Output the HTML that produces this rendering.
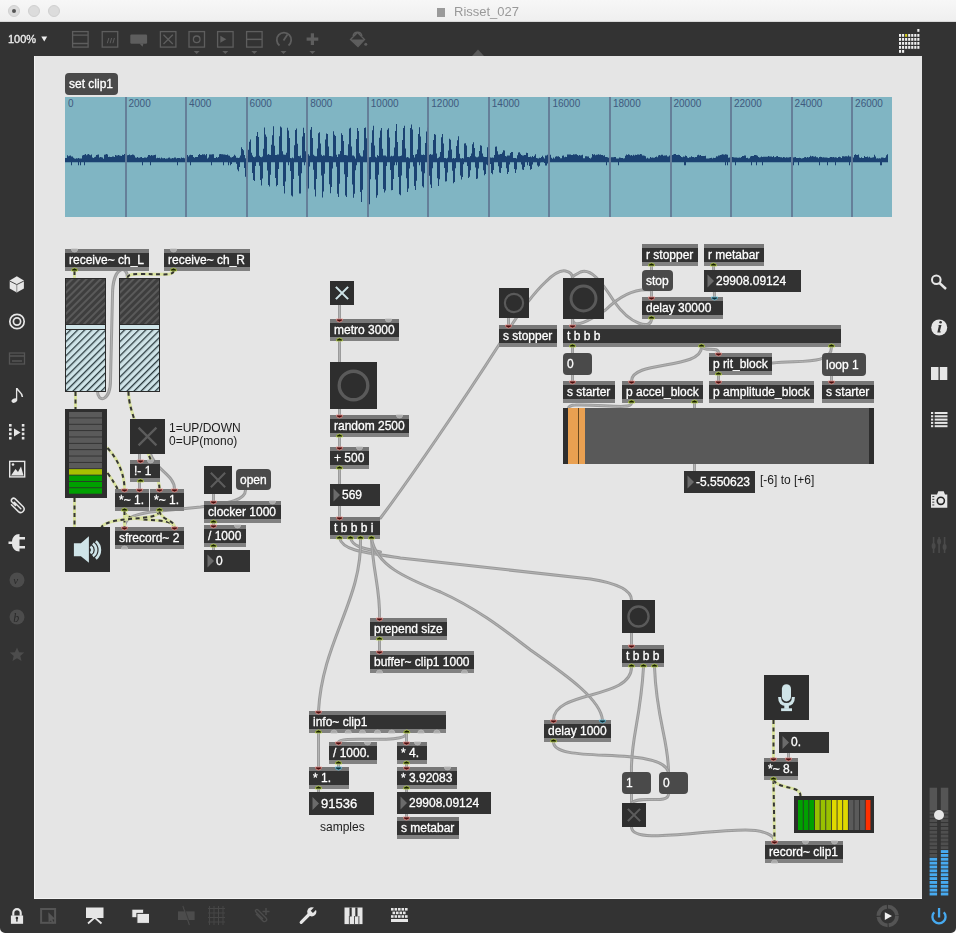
<!DOCTYPE html><html><head><meta charset="utf-8"><style>
*{margin:0;padding:0;box-sizing:border-box}
html,body{width:956px;height:933px;overflow:hidden;background:#333;font-family:"Liberation Sans",sans-serif}
.a{position:absolute}
.ob,.ms,.nb,.cm,.tx{will-change:transform}
.ob{position:absolute;height:22px;background:#323232;border-top:4px solid #777;border-bottom:4px solid #818181;color:#fff;font-size:12px;line-height:14px;padding-left:4px;white-space:nowrap;overflow:hidden;-webkit-text-stroke:0.3px #fff}
.ms,.nb{-webkit-text-stroke:0.3px #fff}
.ms{position:absolute;background:#4a4a4a;border-radius:4px;color:#fff;font-size:12px;white-space:nowrap;padding-left:4px}
.nb{position:absolute;background:#323232;color:#fff;font-size:12px;white-space:nowrap}
.cm{position:absolute;color:#1c1c1c;font-size:12px;white-space:nowrap;line-height:13px}

</style></head><body>
<div class="a" style="left:0;top:0;width:956px;height:22px;background:linear-gradient(#f7f7f7,#efefef);border-bottom:1px solid #d8d8d8"></div>
<div class="a" style="left:8px;top:5px;width:12px;height:12px;border-radius:6px;background:#dcdcdc;border:1px solid #d0d0d0"></div>
<div class="a" style="left:28px;top:5px;width:12px;height:12px;border-radius:6px;background:#dcdcdc;border:1px solid #d0d0d0"></div>
<div class="a" style="left:48px;top:5px;width:12px;height:12px;border-radius:6px;background:#dcdcdc;border:1px solid #d0d0d0"></div>
<div class="a" style="left:12px;top:9px;width:4px;height:4px;border-radius:2px;background:#555"></div>
<div class="a" style="left:437px;top:8px;width:8px;height:9px;background:#9a9a9a"></div>
<div class="a tx" style="left:454px;top:4px;font-size:13px;line-height:16px;color:#999">Risset_027</div>
<div class="a tx" style="left:8px;top:32px;font-size:11px;line-height:14px;color:#f0f0f0;-webkit-text-stroke:0.3px #f0f0f0">100%</div>
<svg class="a" style="left:0;top:0" width="956" height="60">
<path d="M41.3,36.4 L47.2,36.4 L44.25,41.6 Z" fill="#eee"/>
</svg>
<div class="a" style="left:34px;top:56px;width:888px;height:843px;background:#e5e5e5;border-left:1px solid #f3f3f3;border-bottom:1px solid #f3f3f3"></div>
<svg class="a" style="left:65px;top:97px" width="827" height="120"><rect width="827" height="120" fill="#80b5c3"/><rect x="60" y="0" width="2" height="120" fill="#627c93"/><rect x="120" y="0" width="2" height="120" fill="#627c93"/><rect x="181" y="0" width="2" height="120" fill="#627c93"/><rect x="241" y="0" width="2" height="120" fill="#627c93"/><rect x="302" y="0" width="2" height="120" fill="#627c93"/><rect x="362" y="0" width="2" height="120" fill="#627c93"/><rect x="423" y="0" width="2" height="120" fill="#627c93"/><rect x="483" y="0" width="2" height="120" fill="#627c93"/><rect x="544" y="0" width="2" height="120" fill="#627c93"/><rect x="605" y="0" width="2" height="120" fill="#627c93"/><rect x="665" y="0" width="2" height="120" fill="#627c93"/><rect x="726" y="0" width="2" height="120" fill="#627c93"/><rect x="786" y="0" width="2" height="120" fill="#627c93"/><text x="3.0" y="10" font-size="10" fill="#3f5a7e" font-family="Liberation Sans">0</text><text x="63.5" y="10" font-size="10" fill="#3f5a7e" font-family="Liberation Sans">2000</text><text x="124.1" y="10" font-size="10" fill="#3f5a7e" font-family="Liberation Sans">4000</text><text x="184.6" y="10" font-size="10" fill="#3f5a7e" font-family="Liberation Sans">6000</text><text x="245.2" y="10" font-size="10" fill="#3f5a7e" font-family="Liberation Sans">8000</text><text x="305.8" y="10" font-size="10" fill="#3f5a7e" font-family="Liberation Sans">10000</text><text x="366.3" y="10" font-size="10" fill="#3f5a7e" font-family="Liberation Sans">12000</text><text x="426.8" y="10" font-size="10" fill="#3f5a7e" font-family="Liberation Sans">14000</text><text x="487.4" y="10" font-size="10" fill="#3f5a7e" font-family="Liberation Sans">16000</text><text x="547.9" y="10" font-size="10" fill="#3f5a7e" font-family="Liberation Sans">18000</text><text x="608.5" y="10" font-size="10" fill="#3f5a7e" font-family="Liberation Sans">20000</text><text x="669.0" y="10" font-size="10" fill="#3f5a7e" font-family="Liberation Sans">22000</text><text x="729.6" y="10" font-size="10" fill="#3f5a7e" font-family="Liberation Sans">24000</text><text x="790.1" y="10" font-size="10" fill="#3f5a7e" font-family="Liberation Sans">26000</text><path d="M0,61.0 L1,61.0 L1,61.1 L2,61.1 L2,58.3 L3,58.3 L3,59.2 L4,59.2 L4,58.8 L5,58.8 L5,58.4 L6,58.4 L6,59.4 L7,59.4 L7,59.5 L8,59.5 L8,60.8 L9,60.8 L9,61.5 L10,61.5 L10,61.7 L11,61.7 L11,61.2 L12,61.2 L12,61.6 L13,61.6 L13,61.1 L14,61.1 L14,61.6 L15,61.6 L15,61.6 L16,61.6 L16,61.4 L17,61.4 L17,58.4 L18,58.4 L18,58.0 L19,58.0 L19,57.8 L20,57.8 L20,57.1 L21,57.1 L21,58.2 L22,58.2 L22,57.4 L23,57.4 L23,57.0 L24,57.0 L24,57.7 L25,57.7 L25,58.2 L26,58.2 L26,57.5 L27,57.5 L27,60.5 L28,60.5 L28,60.9 L29,60.9 L29,60.3 L30,60.3 L30,59.8 L31,59.8 L31,57.9 L32,57.9 L32,57.7 L33,57.7 L33,57.5 L34,57.5 L34,60.6 L35,60.6 L35,60.1 L36,60.1 L36,60.3 L37,60.3 L37,60.4 L38,60.4 L38,61.7 L39,61.7 L39,57.7 L40,57.7 L40,57.6 L41,57.6 L41,57.0 L42,57.0 L42,57.4 L43,57.4 L43,59.9 L44,59.9 L44,59.8 L45,59.8 L45,59.9 L46,59.9 L46,60.1 L47,60.1 L47,59.4 L48,59.4 L48,59.6 L49,59.6 L49,59.9 L50,59.9 L50,58.1 L51,58.1 L51,58.5 L52,58.5 L52,58.5 L53,58.5 L53,58.0 L54,58.0 L54,58.5 L55,58.5 L55,58.8 L56,58.8 L56,58.9 L57,58.9 L57,57.7 L58,57.7 L58,58.1 L59,58.1 L59,57.1 L60,57.1 L60,57.3 L61,57.3 L61,57.2 L62,57.2 L62,58.2 L63,58.2 L63,57.9 L64,57.9 L64,57.5 L65,57.5 L65,58.2 L66,58.2 L66,58.0 L67,58.0 L67,57.4 L68,57.4 L68,57.8 L69,57.8 L69,58.6 L70,58.6 L70,60.5 L71,60.5 L71,60.8 L72,60.8 L72,60.0 L73,60.0 L73,60.7 L74,60.7 L74,60.7 L75,60.7 L75,60.2 L76,60.2 L76,60.0 L77,60.0 L77,60.9 L78,60.9 L78,61.0 L79,61.0 L79,60.6 L80,60.6 L80,60.5 L81,60.5 L81,60.7 L82,60.7 L82,59.8 L83,59.8 L83,58.1 L84,58.1 L84,58.1 L85,58.1 L85,58.7 L86,58.7 L86,58.0 L87,58.0 L87,58.5 L88,58.5 L88,58.2 L89,58.2 L89,57.9 L90,57.9 L90,57.7 L91,57.7 L91,61.2 L92,61.2 L92,60.7 L93,60.7 L93,60.9 L94,60.9 L94,60.7 L95,60.7 L95,61.4 L96,61.4 L96,60.5 L97,60.5 L97,61.3 L98,61.3 L98,61.3 L99,61.3 L99,61.0 L100,61.0 L100,61.7 L101,61.7 L101,61.5 L102,61.5 L102,61.5 L103,61.5 L103,60.8 L104,60.8 L104,60.6 L105,60.6 L105,61.6 L106,61.6 L106,61.4 L107,61.4 L107,61.1 L108,61.1 L108,61.3 L109,61.3 L109,60.6 L110,60.6 L110,60.5 L111,60.5 L111,61.5 L112,61.5 L112,61.0 L113,61.0 L113,61.1 L114,61.1 L114,61.0 L115,61.0 L115,61.6 L116,61.6 L116,60.6 L117,60.6 L117,61.1 L118,61.1 L118,60.7 L119,60.7 L119,61.3 L120,61.3 L120,60.6 L121,60.6 L121,61.7 L122,61.7 L122,57.9 L123,57.9 L123,59.5 L124,59.5 L124,58.2 L125,58.2 L125,57.8 L126,57.8 L126,57.9 L127,57.9 L127,57.9 L128,57.9 L128,60.0 L129,60.0 L129,60.7 L130,60.7 L130,59.9 L131,59.9 L131,59.9 L132,59.9 L132,59.9 L133,59.9 L133,58.1 L134,58.1 L134,57.1 L135,57.1 L135,58.0 L136,58.0 L136,58.1 L137,58.1 L137,57.2 L138,57.2 L138,57.4 L139,57.4 L139,57.2 L140,57.2 L140,58.2 L141,58.2 L141,57.1 L142,57.1 L142,61.5 L143,61.5 L143,60.6 L144,60.6 L144,57.6 L145,57.6 L145,57.6 L146,57.6 L146,57.5 L147,57.5 L147,57.2 L148,57.2 L148,57.3 L149,57.3 L149,60.9 L150,60.9 L150,60.9 L151,60.9 L151,59.9 L152,59.9 L152,60.8 L153,60.8 L153,60.1 L154,60.1 L154,57.3 L155,57.3 L155,57.1 L156,57.1 L156,57.3 L157,57.3 L157,57.3 L158,57.3 L158,57.6 L159,57.6 L159,57.4 L160,57.4 L160,57.8 L161,57.8 L161,58.0 L162,58.0 L162,57.6 L163,57.6 L163,58.4 L164,58.4 L164,58.7 L165,58.7 L165,60.2 L166,60.2 L166,60.6 L167,60.6 L167,60.0 L168,60.0 L168,59.2 L169,59.2 L169,57.8 L170,57.8 L170,58.8 L171,58.8 L171,60.7 L172,60.7 L172,60.7 L173,60.7 L173,61.0 L174,61.0 L174,60.5 L175,60.5 L175,58.6 L176,58.6 L176,50.3 L177,50.3 L177,52.0 L178,52.0 L178,53.3 L179,53.3 L179,58.1 L180,58.1 L180,61.3 L181,61.3 L181,59.1 L182,59.1 L182,58.7 L183,58.7 L183,52.8 L184,52.8 L184,44.8 L185,44.8 L185,42.6 L186,42.6 L186,55.8 L187,55.8 L187,58.5 L188,58.5 L188,60.0 L189,60.0 L189,60.2 L190,60.2 L190,59.5 L191,59.5 L191,38.9 L192,38.9 L192,35.1 L193,35.1 L193,40.0 L194,40.0 L194,58.7 L195,58.7 L195,59.9 L196,59.9 L196,60.2 L197,60.2 L197,59.5 L198,59.5 L198,51.7 L199,51.7 L199,30.4 L200,30.4 L200,37.5 L201,37.5 L201,39.8 L202,39.8 L202,57.7 L203,57.7 L203,57.1 L204,57.1 L204,57.8 L205,57.8 L205,58.0 L206,58.0 L206,47.7 L207,47.7 L207,38.2 L208,38.2 L208,29.3 L209,29.3 L209,48.8 L210,48.8 L210,58.1 L211,58.1 L211,58.1 L212,58.1 L212,57.4 L213,57.4 L213,57.6 L214,57.6 L214,39.2 L215,39.2 L215,29.6 L216,29.6 L216,30.4 L217,30.4 L217,54.2 L218,54.2 L218,57.6 L219,57.6 L219,57.7 L220,57.7 L220,57.7 L221,57.7 L221,55.8 L222,55.8 L222,30.7 L223,30.7 L223,33.5 L224,33.5 L224,41.1 L225,41.1 L225,61.0 L226,61.0 L226,61.2 L227,61.2 L227,60.6 L228,60.6 L228,61.2 L229,61.2 L229,48.2 L230,48.2 L230,32.9 L231,32.9 L231,31.6 L232,31.6 L232,46.8 L233,46.8 L233,58.9 L234,58.9 L234,59.3 L235,59.3 L235,58.4 L236,58.4 L236,61.0 L237,61.0 L237,39.5 L238,39.5 L238,30.7 L239,30.7 L239,36.1 L240,36.1 L240,54.2 L241,54.2 L241,57.6 L242,57.6 L242,57.8 L243,57.8 L243,57.3 L244,57.3 L244,58.8 L245,58.8 L245,32.8 L246,32.8 L246,30.1 L247,30.1 L247,40.9 L248,40.9 L248,57.8 L249,57.8 L249,58.8 L250,58.8 L250,59.2 L251,59.2 L251,59.3 L252,59.3 L252,51.5 L253,51.5 L253,36.3 L254,36.3 L254,35.2 L255,35.2 L255,46.6 L256,46.6 L256,57.7 L257,57.7 L257,58.9 L258,58.9 L258,58.3 L259,58.3 L259,58.4 L260,58.4 L260,42.5 L261,42.5 L261,36.5 L262,36.5 L262,36.9 L263,36.9 L263,49.6 L264,49.6 L264,58.9 L265,58.9 L265,58.9 L266,58.9 L266,59.2 L267,59.2 L267,59.4 L268,59.4 L268,34.3 L269,34.3 L269,37.8 L270,37.8 L270,38.9 L271,38.9 L271,57.8 L272,57.8 L272,60.1 L273,60.1 L273,57.2 L274,57.2 L274,57.3 L275,57.3 L275,53.9 L276,53.9 L276,36.2 L277,36.2 L277,37.9 L278,37.9 L278,43.9 L279,43.9 L279,58.1 L280,58.1 L280,57.9 L281,57.9 L281,58.2 L282,58.2 L282,58.4 L283,58.4 L283,47.2 L284,47.2 L284,31.6 L285,31.6 L285,30.7 L286,30.7 L286,49.5 L287,49.5 L287,58.5 L288,58.5 L288,58.6 L289,58.6 L289,59.4 L290,59.4 L290,61.6 L291,61.6 L291,42.0 L292,42.0 L292,30.9 L293,30.9 L293,33.9 L294,33.9 L294,56.3 L295,56.3 L295,58.5 L296,58.5 L296,59.5 L297,59.5 L297,59.6 L298,59.6 L298,53.2 L299,53.2 L299,31.1 L300,31.1 L300,30.5 L301,30.5 L301,41.2 L302,41.2 L302,60.2 L303,60.2 L303,59.9 L304,59.9 L304,60.2 L305,60.2 L305,60.1 L306,60.1 L306,45.8 L307,45.8 L307,33.2 L308,33.2 L308,28.8 L309,28.8 L309,48.4 L310,48.4 L310,59.8 L311,59.8 L311,60.5 L312,60.5 L312,58.0 L313,58.0 L313,58.9 L314,58.9 L314,40.8 L315,40.8 L315,33.6 L316,33.6 L316,30.9 L317,30.9 L317,51.8 L318,51.8 L318,58.6 L319,58.6 L319,58.6 L320,58.6 L320,58.6 L321,58.6 L321,59.6 L322,59.6 L322,32.7 L323,32.7 L323,31.3 L324,31.3 L324,40.6 L325,40.6 L325,59.4 L326,59.4 L326,58.7 L327,58.7 L327,59.3 L328,59.3 L328,58.7 L329,58.7 L329,50.6 L330,50.6 L330,34.0 L331,34.0 L331,27.0 L332,27.0 L332,45.1 L333,45.1 L333,59.3 L334,59.3 L334,59.2 L335,59.2 L335,58.9 L336,58.9 L336,58.5 L337,58.5 L337,43.0 L338,43.0 L338,31.0 L339,31.0 L339,28.8 L340,28.8 L340,51.6 L341,51.6 L341,60.4 L342,60.4 L342,59.9 L343,59.9 L343,60.4 L344,60.4 L344,61.3 L345,61.3 L345,31.0 L346,31.0 L346,27.6 L347,27.6 L347,32.4 L348,32.4 L348,58.0 L349,58.0 L349,60.6 L350,60.6 L350,57.5 L351,57.5 L351,57.1 L352,57.1 L352,52.4 L353,52.4 L353,37.1 L354,37.1 L354,30.3 L355,30.3 L355,39.6 L356,39.6 L356,57.8 L357,57.8 L357,57.9 L358,57.9 L358,57.6 L359,57.6 L359,57.9 L360,57.9 L360,45.9 L361,45.9 L361,34.4 L362,34.4 L362,30.6 L363,30.6 L363,47.6 L364,47.6 L364,57.7 L365,57.7 L365,57.1 L366,57.1 L366,57.8 L367,57.8 L367,57.4 L368,57.4 L368,43.1 L369,43.1 L369,36.9 L370,36.9 L370,37.7 L371,37.7 L371,56.5 L372,56.5 L372,61.3 L373,61.3 L373,60.7 L374,60.7 L374,59.8 L375,59.8 L375,55.0 L376,55.0 L376,40.2 L377,40.2 L377,37.1 L378,37.1 L378,46.6 L379,46.6 L379,61.1 L380,61.1 L380,61.1 L381,61.1 L381,61.5 L382,61.5 L382,60.7 L383,60.7 L383,53.5 L384,53.5 L384,41.8 L385,41.8 L385,42.8 L386,42.8 L386,52.5 L387,52.5 L387,61.5 L388,61.5 L388,60.9 L389,60.9 L389,61.5 L390,61.5 L390,60.9 L391,60.9 L391,49.1 L392,49.1 L392,43.2 L393,43.2 L393,39.3 L394,39.3 L394,56.7 L395,56.7 L395,61.2 L396,61.2 L396,61.5 L397,61.5 L397,60.9 L398,60.9 L398,61.5 L399,61.5 L399,46.6 L400,46.6 L400,46.2 L401,46.2 L401,48.4 L402,48.4 L402,59.9 L403,59.9 L403,60.1 L404,60.1 L404,60.3 L405,60.3 L405,59.1 L406,59.1 L406,56.4 L407,56.4 L407,47.2 L408,47.2 L408,45.2 L409,45.2 L409,50.9 L410,50.9 L410,59.5 L411,59.5 L411,60.2 L412,60.2 L412,60.3 L413,60.3 L413,59.4 L414,59.4 L414,54.1 L415,54.1 L415,48.3 L416,48.3 L416,48.7 L417,48.7 L417,56.5 L418,56.5 L418,59.5 L419,59.5 L419,59.9 L420,59.9 L420,60.0 L421,60.0 L421,60.1 L422,60.1 L422,50.2 L423,50.2 L423,46.4 L424,46.4 L424,51.8 L425,51.8 L425,60.5 L426,60.5 L426,60.8 L427,60.8 L427,60.6 L428,60.6 L428,60.8 L429,60.8 L429,58.1 L430,58.1 L430,49.7 L431,49.7 L431,49.5 L432,49.5 L432,54.2 L433,54.2 L433,57.6 L434,57.6 L434,57.5 L435,57.5 L435,57.0 L436,57.0 L436,57.0 L437,57.0 L437,55.6 L438,55.6 L438,53.2 L439,53.2 L439,53.6 L440,53.6 L440,59.0 L441,59.0 L441,59.4 L442,59.4 L442,58.4 L443,58.4 L443,58.6 L444,58.6 L444,58.6 L445,58.6 L445,56.0 L446,56.0 L446,54.9 L447,54.9 L447,54.9 L448,54.9 L448,61.1 L449,61.1 L449,61.0 L450,61.0 L450,60.9 L451,60.9 L451,61.4 L452,61.4 L452,58.3 L453,58.3 L453,55.5 L454,55.5 L454,55.2 L455,55.2 L455,56.8 L456,56.8 L456,57.9 L457,57.9 L457,58.5 L458,58.5 L458,58.6 L459,58.6 L459,58.1 L460,58.1 L460,58.0 L461,58.0 L461,55.8 L462,55.8 L462,56.1 L463,56.1 L463,60.1 L464,60.1 L464,59.9 L465,59.9 L465,59.6 L466,59.6 L466,60.3 L467,60.3 L467,59.1 L468,59.1 L468,60.0 L469,60.0 L469,58.7 L470,58.7 L470,57.3 L471,57.3 L471,60.9 L472,60.9 L472,61.2 L473,61.2 L473,61.4 L474,61.4 L474,60.8 L475,60.8 L475,61.0 L476,61.0 L476,60.1 L477,60.1 L477,58.7 L478,58.7 L478,60.3 L479,60.3 L479,61.6 L480,61.6 L480,58.6 L481,58.6 L481,58.5 L482,58.5 L482,57.7 L483,57.7 L483,60.0 L484,60.0 L484,58.3 L485,58.3 L485,57.7 L486,57.7 L486,60.8 L487,60.8 L487,61.7 L488,61.7 L488,60.5 L489,60.5 L489,61.6 L490,61.6 L490,59.7 L491,59.7 L491,59.2 L492,59.2 L492,59.6 L493,59.6 L493,59.2 L494,59.2 L494,60.0 L495,60.0 L495,61.2 L496,61.2 L496,61.2 L497,61.2 L497,58.8 L498,58.8 L498,58.4 L499,58.4 L499,60.3 L500,60.3 L500,59.7 L501,59.7 L501,59.9 L502,59.9 L502,57.5 L503,57.5 L503,57.5 L504,57.5 L504,57.5 L505,57.5 L505,57.6 L506,57.6 L506,58.1 L507,58.1 L507,57.9 L508,57.9 L508,57.2 L509,57.2 L509,57.4 L510,57.4 L510,57.2 L511,57.2 L511,57.2 L512,57.2 L512,58.1 L513,58.1 L513,58.8 L514,58.8 L514,58.0 L515,58.0 L515,58.6 L516,58.6 L516,58.3 L517,58.3 L517,57.8 L518,57.8 L518,61.2 L519,61.2 L519,61.2 L520,61.2 L520,59.2 L521,59.2 L521,59.2 L522,59.2 L522,59.4 L523,59.4 L523,59.5 L524,59.5 L524,60.9 L525,60.9 L525,61.5 L526,61.5 L526,60.6 L527,60.6 L527,57.1 L528,57.1 L528,57.7 L529,57.7 L529,57.2 L530,57.2 L530,58.2 L531,58.2 L531,57.7 L532,57.7 L532,57.7 L533,57.7 L533,57.3 L534,57.3 L534,57.7 L535,57.7 L535,57.4 L536,57.4 L536,58.1 L537,58.1 L537,57.9 L538,57.9 L538,58.8 L539,58.8 L539,58.3 L540,58.3 L540,60.1 L541,60.1 L541,60.0 L542,60.0 L542,60.3 L543,60.3 L543,60.8 L544,60.8 L544,60.0 L545,60.0 L545,60.7 L546,60.7 L546,60.3 L547,60.3 L547,60.3 L548,60.3 L548,60.2 L549,60.2 L549,60.1 L550,60.1 L550,60.1 L551,60.1 L551,61.5 L552,61.5 L552,61.4 L553,61.4 L553,61.6 L554,61.6 L554,60.6 L555,60.6 L555,60.7 L556,60.7 L556,61.0 L557,61.0 L557,60.9 L558,60.9 L558,61.4 L559,61.4 L559,61.3 L560,61.3 L560,58.8 L561,58.8 L561,57.6 L562,57.6 L562,57.9 L563,57.9 L563,57.3 L564,57.3 L564,57.7 L565,57.7 L565,58.5 L566,58.5 L566,58.1 L567,58.1 L567,58.7 L568,58.7 L568,57.7 L569,57.7 L569,58.4 L570,58.4 L570,57.8 L571,57.8 L571,58.1 L572,58.1 L572,57.6 L573,57.6 L573,57.5 L574,57.5 L574,57.8 L575,57.8 L575,57.0 L576,57.0 L576,57.2 L577,57.2 L577,58.6 L578,58.6 L578,58.5 L579,58.5 L579,58.7 L580,58.7 L580,59.3 L581,59.3 L581,61.5 L582,61.5 L582,60.7 L583,60.7 L583,61.6 L584,61.6 L584,61.4 L585,61.4 L585,59.9 L586,59.9 L586,60.7 L587,60.7 L587,60.6 L588,60.6 L588,60.7 L589,60.7 L589,60.7 L590,60.7 L590,60.1 L591,60.1 L591,59.6 L592,59.6 L592,60.3 L593,60.3 L593,58.5 L594,58.5 L594,58.0 L595,58.0 L595,58.6 L596,58.6 L596,57.7 L597,57.7 L597,57.8 L598,57.8 L598,58.7 L599,58.7 L599,58.5 L600,58.5 L600,58.6 L601,58.6 L601,58.3 L602,58.3 L602,59.6 L603,59.6 L603,59.4 L604,59.4 L604,58.4 L605,58.4 L605,58.5 L606,58.5 L606,58.5 L607,58.5 L607,57.9 L608,57.9 L608,57.4 L609,57.4 L609,57.1 L610,57.1 L610,57.0 L611,57.0 L611,58.1 L612,58.1 L612,57.9 L613,57.9 L613,57.7 L614,57.7 L614,58.1 L615,58.1 L615,59.1 L616,59.1 L616,60.1 L617,60.1 L617,60.2 L618,60.2 L618,59.6 L619,59.6 L619,59.7 L620,59.7 L620,58.4 L621,58.4 L621,59.1 L622,59.1 L622,60.5 L623,60.5 L623,61.0 L624,61.0 L624,60.3 L625,60.3 L625,60.3 L626,60.3 L626,59.3 L627,59.3 L627,60.0 L628,60.0 L628,59.9 L629,59.9 L629,60.4 L630,60.4 L630,59.9 L631,59.9 L631,60.0 L632,60.0 L632,58.2 L633,58.2 L633,57.8 L634,57.8 L634,58.4 L635,58.4 L635,58.1 L636,58.1 L636,58.9 L637,58.9 L637,59.0 L638,59.0 L638,59.1 L639,59.1 L639,58.9 L640,58.9 L640,58.8 L641,58.8 L641,61.4 L642,61.4 L642,61.4 L643,61.4 L643,61.4 L644,61.4 L644,61.2 L645,61.2 L645,61.1 L646,61.1 L646,60.7 L647,60.7 L647,61.5 L648,61.5 L648,60.7 L649,60.7 L649,60.9 L650,60.9 L650,60.7 L651,60.7 L651,59.2 L652,59.2 L652,59.6 L653,59.6 L653,58.6 L654,58.6 L654,58.5 L655,58.5 L655,58.0 L656,58.0 L656,57.7 L657,57.7 L657,57.3 L658,57.3 L658,57.4 L659,57.4 L659,57.7 L660,57.7 L660,57.3 L661,57.3 L661,57.6 L662,57.6 L662,57.8 L663,57.8 L663,60.7 L664,60.7 L664,60.4 L665,60.4 L665,60.8 L666,60.8 L666,59.9 L667,59.9 L667,59.9 L668,59.9 L668,60.3 L669,60.3 L669,60.6 L670,60.6 L670,60.4 L671,60.4 L671,60.4 L672,60.4 L672,60.7 L673,60.7 L673,60.7 L674,60.7 L674,60.5 L675,60.5 L675,60.7 L676,60.7 L676,60.1 L677,60.1 L677,59.1 L678,59.1 L678,58.9 L679,58.9 L679,58.5 L680,58.5 L680,58.4 L681,58.4 L681,61.0 L682,61.0 L682,60.8 L683,60.8 L683,61.4 L684,61.4 L684,61.2 L685,61.2 L685,59.4 L686,59.4 L686,58.9 L687,58.9 L687,58.9 L688,58.9 L688,59.0 L689,59.0 L689,57.9 L690,57.9 L690,58.1 L691,58.1 L691,58.3 L692,58.3 L692,58.7 L693,58.7 L693,60.0 L694,60.0 L694,60.6 L695,60.6 L695,60.3 L696,60.3 L696,59.6 L697,59.6 L697,60.1 L698,60.1 L698,59.8 L699,59.8 L699,59.8 L700,59.8 L700,59.8 L701,59.8 L701,59.8 L702,59.8 L702,59.8 L703,59.8 L703,59.1 L704,59.1 L704,59.5 L705,59.5 L705,59.4 L706,59.4 L706,59.5 L707,59.5 L707,60.0 L708,60.0 L708,59.1 L709,59.1 L709,60.3 L710,60.3 L710,60.0 L711,60.0 L711,59.2 L712,59.2 L712,59.1 L713,59.1 L713,60.0 L714,60.0 L714,60.1 L715,60.1 L715,60.3 L716,60.3 L716,60.3 L717,60.3 L717,60.8 L718,60.8 L718,60.1 L719,60.1 L719,60.3 L720,60.3 L720,60.8 L721,60.8 L721,60.2 L722,60.2 L722,60.5 L723,60.5 L723,60.4 L724,60.4 L724,60.3 L725,60.3 L725,60.1 L726,60.1 L726,60.2 L727,60.2 L727,60.5 L728,60.5 L728,60.4 L729,60.4 L729,60.2 L730,60.2 L730,60.0 L731,60.0 L731,61.0 L732,61.0 L732,61.0 L733,61.0 L733,60.9 L734,60.9 L734,60.7 L735,60.7 L735,60.9 L736,60.9 L736,61.4 L737,61.4 L737,61.2 L738,61.2 L738,61.0 L739,61.0 L739,60.3 L740,60.3 L740,59.9 L741,59.9 L741,60.8 L742,60.8 L742,60.1 L743,60.1 L743,60.6 L744,60.6 L744,60.0 L745,60.0 L745,58.7 L746,58.7 L746,59.5 L747,59.5 L747,58.9 L748,58.9 L748,59.4 L749,59.4 L749,59.8 L750,59.8 L750,59.2 L751,59.2 L751,60.2 L752,60.2 L752,60.2 L753,60.2 L753,61.3 L754,61.3 L754,59.9 L755,59.9 L755,59.8 L756,59.8 L756,60.0 L757,60.0 L757,60.6 L758,60.6 L758,60.3 L759,60.3 L759,60.4 L760,60.4 L760,60.4 L761,60.4 L761,60.4 L762,60.4 L762,60.7 L763,60.7 L763,61.0 L764,61.0 L764,60.7 L765,60.7 L765,60.0 L766,60.0 L766,60.1 L767,60.1 L767,60.3 L768,60.3 L768,59.9 L769,59.9 L769,60.4 L770,60.4 L770,60.3 L771,60.3 L771,60.6 L772,60.6 L772,60.9 L773,60.9 L773,60.1 L774,60.1 L774,59.8 L775,59.8 L775,60.3 L776,60.3 L776,60.9 L777,60.9 L777,59.3 L778,59.3 L778,59.2 L779,59.2 L779,59.6 L780,59.6 L780,59.3 L781,59.3 L781,59.2 L782,59.2 L782,59.5 L783,59.5 L783,58.6 L784,58.6 L784,59.5 L785,59.5 L785,59.4 L786,59.4 L786,59.9 L787,59.9 L787,60.0 L788,60.0 L788,60.6 L789,60.6 L789,58.1 L790,58.1 L790,57.2 L791,57.2 L791,58.0 L792,58.0 L792,57.9 L793,57.9 L793,57.4 L794,57.4 L794,60.5 L795,60.5 L795,60.9 L796,60.9 L796,60.2 L797,60.2 L797,61.0 L798,61.0 L798,60.9 L799,60.9 L799,59.1 L800,59.1 L800,60.1 L801,60.1 L801,60.1 L802,60.1 L802,59.4 L803,59.4 L803,60.4 L804,60.4 L804,59.8 L805,59.8 L805,60.7 L806,60.7 L806,60.8 L807,60.8 L807,60.6 L808,60.6 L808,60.3 L809,60.3 L809,57.7 L810,57.7 L810,59.6 L811,59.6 L811,61.4 L812,61.4 L812,61.2 L813,61.2 L813,61.6 L814,61.6 L814,61.2 L815,61.2 L815,61.6 L816,61.6 L816,60.5 L817,60.5 L817,60.6 L818,60.6 L818,60.7 L819,60.7 L819,60.9 L820,60.9 L820,60.6 L821,60.6 L821,58.2 L822,58.2 L822,57.3 L823,57.3 L823,65.3 L822,65.3 L822,65.3 L821,65.3 L821,65.3 L820,65.3 L820,65.3 L819,65.3 L819,65.3 L818,65.3 L818,65.3 L817,65.3 L817,68.3 L816,68.3 L816,68.3 L815,68.3 L815,65.3 L814,65.3 L814,65.3 L813,65.3 L813,65.3 L812,65.3 L812,65.3 L811,65.3 L811,65.3 L810,65.3 L810,65.3 L809,65.3 L809,65.3 L808,65.3 L808,65.3 L807,65.3 L807,65.3 L806,65.3 L806,65.3 L805,65.3 L805,65.3 L804,65.3 L804,65.3 L803,65.3 L803,65.3 L802,65.3 L802,65.3 L801,65.3 L801,65.3 L800,65.3 L800,65.3 L799,65.3 L799,65.3 L798,65.3 L798,65.3 L797,65.3 L797,65.3 L796,65.3 L796,65.3 L795,65.3 L795,65.3 L794,65.3 L794,65.3 L793,65.3 L793,65.3 L792,65.3 L792,65.3 L791,65.3 L791,65.3 L790,65.3 L790,65.3 L789,65.3 L789,65.3 L788,65.3 L788,65.3 L787,65.3 L787,65.3 L786,65.3 L786,65.3 L785,65.3 L785,68.3 L784,68.3 L784,65.3 L783,65.3 L783,65.3 L782,65.3 L782,65.3 L781,65.3 L781,65.3 L780,65.3 L780,65.3 L779,65.3 L779,65.3 L778,65.3 L778,65.3 L777,65.3 L777,65.3 L776,65.3 L776,65.3 L775,65.3 L775,65.3 L774,65.3 L774,65.3 L773,65.3 L773,65.3 L772,65.3 L772,65.3 L771,65.3 L771,68.3 L770,68.3 L770,65.3 L769,65.3 L769,65.3 L768,65.3 L768,65.3 L767,65.3 L767,65.3 L766,65.3 L766,65.3 L765,65.3 L765,65.3 L764,65.3 L764,65.3 L763,65.3 L763,68.3 L762,68.3 L762,65.3 L761,65.3 L761,65.3 L760,65.3 L760,65.3 L759,65.3 L759,65.3 L758,65.3 L758,65.3 L757,65.3 L757,65.3 L756,65.3 L756,65.3 L755,65.3 L755,68.3 L754,68.3 L754,65.3 L753,65.3 L753,65.3 L752,65.3 L752,65.3 L751,65.3 L751,65.3 L750,65.3 L750,65.3 L749,65.3 L749,65.3 L748,65.3 L748,65.3 L747,65.3 L747,65.3 L746,65.3 L746,65.3 L745,65.3 L745,65.3 L744,65.3 L744,65.3 L743,65.3 L743,65.3 L742,65.3 L742,65.3 L741,65.3 L741,65.3 L740,65.3 L740,65.3 L739,65.3 L739,65.3 L738,65.3 L738,65.3 L737,65.3 L737,65.3 L736,65.3 L736,65.3 L735,65.3 L735,65.3 L734,65.3 L734,68.3 L733,68.3 L733,65.3 L732,65.3 L732,65.3 L731,65.3 L731,65.3 L730,65.3 L730,65.3 L729,65.3 L729,68.3 L728,68.3 L728,65.3 L727,65.3 L727,65.3 L726,65.3 L726,65.3 L725,65.3 L725,65.3 L724,65.3 L724,65.3 L723,65.3 L723,65.3 L722,65.3 L722,65.3 L721,65.3 L721,65.3 L720,65.3 L720,65.3 L719,65.3 L719,65.3 L718,65.3 L718,65.3 L717,65.3 L717,65.3 L716,65.3 L716,65.3 L715,65.3 L715,65.3 L714,65.3 L714,65.3 L713,65.3 L713,65.3 L712,65.3 L712,65.3 L711,65.3 L711,65.3 L710,65.3 L710,65.3 L709,65.3 L709,65.3 L708,65.3 L708,65.3 L707,65.3 L707,65.3 L706,65.3 L706,65.3 L705,65.3 L705,65.3 L704,65.3 L704,65.3 L703,65.3 L703,65.3 L702,65.3 L702,65.3 L701,65.3 L701,65.3 L700,65.3 L700,65.3 L699,65.3 L699,65.3 L698,65.3 L698,68.3 L697,68.3 L697,65.3 L696,65.3 L696,65.3 L695,65.3 L695,65.3 L694,65.3 L694,65.3 L693,65.3 L693,65.3 L692,65.3 L692,68.3 L691,68.3 L691,65.3 L690,65.3 L690,65.3 L689,65.3 L689,65.3 L688,65.3 L688,65.3 L687,65.3 L687,68.3 L686,68.3 L686,65.3 L685,65.3 L685,65.3 L684,65.3 L684,65.3 L683,65.3 L683,65.3 L682,65.3 L682,65.3 L681,65.3 L681,65.3 L680,65.3 L680,65.3 L679,65.3 L679,65.3 L678,65.3 L678,65.3 L677,65.3 L677,65.3 L676,65.3 L676,65.3 L675,65.3 L675,65.3 L674,65.3 L674,65.3 L673,65.3 L673,65.3 L672,65.3 L672,65.3 L671,65.3 L671,68.3 L670,68.3 L670,65.3 L669,65.3 L669,65.3 L668,65.3 L668,65.3 L667,65.3 L667,65.3 L666,65.3 L666,65.3 L665,65.3 L665,65.3 L664,65.3 L664,65.3 L663,65.3 L663,68.3 L662,68.3 L662,65.3 L661,65.3 L661,68.3 L660,68.3 L660,65.3 L659,65.3 L659,65.3 L658,65.3 L658,65.3 L657,65.3 L657,65.3 L656,65.3 L656,65.3 L655,65.3 L655,65.3 L654,65.3 L654,65.3 L653,65.3 L653,65.3 L652,65.3 L652,65.3 L651,65.3 L651,65.3 L650,65.3 L650,65.3 L649,65.3 L649,65.3 L648,65.3 L648,65.3 L647,65.3 L647,65.3 L646,65.3 L646,65.3 L645,65.3 L645,65.3 L644,65.3 L644,65.3 L643,65.3 L643,65.3 L642,65.3 L642,65.3 L641,65.3 L641,65.3 L640,65.3 L640,65.3 L639,65.3 L639,65.3 L638,65.3 L638,65.3 L637,65.3 L637,65.3 L636,65.3 L636,65.3 L635,65.3 L635,65.3 L634,65.3 L634,65.3 L633,65.3 L633,65.3 L632,65.3 L632,65.3 L631,65.3 L631,65.3 L630,65.3 L630,65.3 L629,65.3 L629,65.3 L628,65.3 L628,65.3 L627,65.3 L627,65.3 L626,65.3 L626,65.3 L625,65.3 L625,65.3 L624,65.3 L624,65.3 L623,65.3 L623,65.3 L622,65.3 L622,65.3 L621,65.3 L621,68.3 L620,68.3 L620,68.3 L619,68.3 L619,65.3 L618,65.3 L618,65.3 L617,65.3 L617,65.3 L616,65.3 L616,65.3 L615,65.3 L615,65.3 L614,65.3 L614,65.3 L613,65.3 L613,65.3 L612,65.3 L612,65.3 L611,65.3 L611,65.3 L610,65.3 L610,65.3 L609,65.3 L609,65.3 L608,65.3 L608,65.3 L607,65.3 L607,65.3 L606,65.3 L606,65.3 L605,65.3 L605,65.3 L604,65.3 L604,65.3 L603,65.3 L603,65.3 L602,65.3 L602,65.3 L601,65.3 L601,65.3 L600,65.3 L600,65.3 L599,65.3 L599,65.3 L598,65.3 L598,65.3 L597,65.3 L597,65.3 L596,65.3 L596,65.3 L595,65.3 L595,65.3 L594,65.3 L594,65.3 L593,65.3 L593,65.3 L592,65.3 L592,65.3 L591,65.3 L591,65.3 L590,65.3 L590,65.3 L589,65.3 L589,65.3 L588,65.3 L588,65.3 L587,65.3 L587,65.3 L586,65.3 L586,65.3 L585,65.3 L585,65.3 L584,65.3 L584,65.3 L583,65.3 L583,65.3 L582,65.3 L582,65.3 L581,65.3 L581,65.3 L580,65.3 L580,65.3 L579,65.3 L579,65.3 L578,65.3 L578,65.3 L577,65.3 L577,65.3 L576,65.3 L576,65.3 L575,65.3 L575,65.3 L574,65.3 L574,65.3 L573,65.3 L573,65.3 L572,65.3 L572,65.3 L571,65.3 L571,65.3 L570,65.3 L570,65.3 L569,65.3 L569,65.3 L568,65.3 L568,65.3 L567,65.3 L567,65.3 L566,65.3 L566,65.3 L565,65.3 L565,65.3 L564,65.3 L564,65.3 L563,65.3 L563,65.3 L562,65.3 L562,65.3 L561,65.3 L561,65.3 L560,65.3 L560,65.3 L559,65.3 L559,65.3 L558,65.3 L558,65.3 L557,65.3 L557,65.3 L556,65.3 L556,65.3 L555,65.3 L555,65.3 L554,65.3 L554,68.3 L553,68.3 L553,65.3 L552,65.3 L552,65.3 L551,65.3 L551,65.3 L550,65.3 L550,65.3 L549,65.3 L549,65.3 L548,65.3 L548,65.3 L547,65.3 L547,65.3 L546,65.3 L546,65.3 L545,65.3 L545,65.3 L544,65.3 L544,65.3 L543,65.3 L543,65.3 L542,65.3 L542,68.3 L541,68.3 L541,65.3 L540,65.3 L540,65.3 L539,65.3 L539,65.3 L538,65.3 L538,65.3 L537,65.3 L537,65.3 L536,65.3 L536,65.3 L535,65.3 L535,65.3 L534,65.3 L534,65.3 L533,65.3 L533,65.3 L532,65.3 L532,65.3 L531,65.3 L531,65.3 L530,65.3 L530,65.3 L529,65.3 L529,65.3 L528,65.3 L528,65.3 L527,65.3 L527,65.3 L526,65.3 L526,65.3 L525,65.3 L525,65.3 L524,65.3 L524,65.3 L523,65.3 L523,65.3 L522,65.3 L522,65.3 L521,65.3 L521,65.3 L520,65.3 L520,65.3 L519,65.3 L519,65.3 L518,65.3 L518,65.3 L517,65.3 L517,65.3 L516,65.3 L516,65.3 L515,65.3 L515,65.3 L514,65.3 L514,65.3 L513,65.3 L513,65.3 L512,65.3 L512,65.3 L511,65.3 L511,65.3 L510,65.3 L510,65.3 L509,65.3 L509,65.3 L508,65.3 L508,65.3 L507,65.3 L507,65.3 L506,65.3 L506,65.3 L505,65.3 L505,65.3 L504,65.3 L504,65.3 L503,65.3 L503,65.3 L502,65.3 L502,65.3 L501,65.3 L501,65.3 L500,65.3 L500,65.3 L499,65.3 L499,65.3 L498,65.3 L498,65.3 L497,65.3 L497,65.3 L496,65.3 L496,65.3 L495,65.3 L495,65.3 L494,65.3 L494,65.3 L493,65.3 L493,65.3 L492,65.3 L492,65.3 L491,65.3 L491,65.3 L490,65.3 L490,65.3 L489,65.3 L489,65.3 L488,65.3 L488,65.3 L487,65.3 L487,65.3 L486,65.3 L486,65.3 L485,65.3 L485,65.3 L484,65.3 L484,65.3 L483,65.3 L483,66.5 L482,66.5 L482,68.5 L481,68.5 L481,68.6 L480,68.6 L480,66.0 L479,66.0 L479,65.3 L478,65.3 L478,65.3 L477,65.3 L477,65.3 L476,65.3 L476,65.6 L475,65.6 L475,68.7 L474,68.7 L474,69.8 L473,69.8 L473,68.5 L472,68.5 L472,65.3 L471,65.3 L471,65.3 L470,65.3 L470,65.3 L469,65.3 L469,65.3 L468,65.3 L468,67.4 L467,67.4 L467,71.9 L466,71.9 L466,72.8 L465,72.8 L465,68.9 L464,68.9 L464,65.3 L463,65.3 L463,68.3 L462,68.3 L462,65.3 L461,65.3 L461,65.3 L460,65.3 L460,69.9 L459,69.9 L459,72.9 L458,72.9 L458,72.6 L457,72.6 L457,67.6 L456,67.6 L456,65.3 L455,65.3 L455,65.3 L454,65.3 L454,65.3 L453,65.3 L453,65.3 L452,65.3 L452,72.4 L451,72.4 L451,76.0 L450,76.0 L450,72.1 L449,72.1 L449,65.3 L448,65.3 L448,65.3 L447,65.3 L447,65.3 L446,65.3 L446,65.3 L445,65.3 L445,67.6 L444,67.6 L444,74.9 L443,74.9 L443,76.9 L442,76.9 L442,71.3 L441,71.3 L441,65.3 L440,65.3 L440,65.3 L439,65.3 L439,65.3 L438,65.3 L438,65.3 L437,65.3 L437,70.9 L436,70.9 L436,76.0 L435,76.0 L435,75.6 L434,75.6 L434,69.2 L433,69.2 L433,65.3 L432,65.3 L432,65.3 L431,65.3 L431,65.3 L430,65.3 L430,65.3 L429,65.3 L429,73.0 L428,73.0 L428,77.2 L427,77.2 L427,76.1 L426,76.1 L426,67.0 L425,67.0 L425,65.3 L424,65.3 L424,65.3 L423,65.3 L423,68.3 L422,68.3 L422,67.4 L421,67.4 L421,77.0 L420,77.0 L420,78.3 L419,78.3 L419,73.2 L418,73.2 L418,65.3 L417,65.3 L417,65.3 L416,65.3 L416,65.3 L415,65.3 L415,65.3 L414,65.3 L414,71.4 L413,71.4 L413,81.6 L412,81.6 L412,82.1 L411,82.1 L411,70.6 L410,70.6 L410,65.3 L409,65.3 L409,65.3 L408,65.3 L408,65.3 L407,65.3 L407,65.3 L406,65.3 L406,73.3 L405,73.3 L405,79.7 L404,79.7 L404,80.9 L403,80.9 L403,68.9 L402,68.9 L402,65.3 L401,65.3 L401,65.3 L400,65.3 L400,65.3 L399,65.3 L399,67.3 L398,67.3 L398,79.9 L397,79.9 L397,82.5 L396,82.5 L396,78.6 L395,78.6 L395,65.3 L394,65.3 L394,65.3 L393,65.3 L393,65.3 L392,65.3 L392,65.3 L391,65.3 L391,71.2 L390,71.2 L390,85.0 L389,85.0 L389,86.3 L388,86.3 L388,73.8 L387,73.8 L387,65.3 L386,65.3 L386,65.3 L385,65.3 L385,65.3 L384,65.3 L384,65.3 L383,65.3 L383,75.6 L382,75.6 L382,84.3 L381,84.3 L381,84.4 L380,84.4 L380,71.1 L379,71.1 L379,65.3 L378,65.3 L378,65.3 L377,65.3 L377,65.3 L376,65.3 L376,65.3 L375,65.3 L375,82.3 L374,82.3 L374,89.0 L373,89.0 L373,81.3 L372,81.3 L372,65.3 L371,65.3 L371,65.3 L370,65.3 L370,65.3 L369,65.3 L369,65.3 L368,65.3 L368,71.3 L367,71.3 L367,90.9 L366,90.9 L366,87.4 L365,87.4 L365,78.7 L364,78.7 L364,65.3 L363,65.3 L363,65.3 L362,65.3 L362,65.3 L361,65.3 L361,65.3 L360,65.3 L360,76.3 L359,76.3 L359,90.4 L358,90.4 L358,89.2 L357,89.2 L357,74.5 L356,74.5 L356,65.3 L355,65.3 L355,68.3 L354,68.3 L354,65.3 L353,65.3 L353,65.3 L352,65.3 L352,83.8 L351,83.8 L351,93.1 L350,93.1 L350,88.9 L349,88.9 L349,69.6 L348,69.6 L348,65.3 L347,65.3 L347,65.3 L346,65.3 L346,65.3 L345,65.3 L345,71.5 L344,71.5 L344,91.5 L343,91.5 L343,95.0 L342,95.0 L342,81.2 L341,81.2 L341,65.3 L340,65.3 L340,65.3 L339,65.3 L339,65.3 L338,65.3 L338,65.3 L337,65.3 L337,78.6 L336,78.6 L336,98.2 L335,98.2 L335,97.2 L334,97.2 L334,80.1 L333,80.1 L333,65.3 L332,65.3 L332,68.3 L331,68.3 L331,65.3 L330,65.3 L330,68.3 L329,68.3 L329,82.1 L328,82.1 L328,93.1 L327,93.1 L327,93.3 L326,93.3 L326,72.9 L325,72.9 L325,65.3 L324,65.3 L324,65.3 L323,65.3 L323,65.3 L322,65.3 L322,68.9 L321,68.9 L321,93.6 L320,93.6 L320,95.6 L319,95.6 L319,92.1 L318,92.1 L318,65.3 L317,65.3 L317,65.3 L316,65.3 L316,65.3 L315,65.3 L315,65.3 L314,65.3 L314,77.7 L313,77.7 L313,98.2 L312,98.2 L312,100.8 L311,100.8 L311,82.5 L310,82.5 L310,65.3 L309,65.3 L309,65.3 L308,65.3 L308,65.3 L307,65.3 L307,65.3 L306,65.3 L306,82.2 L305,82.2 L305,107.2 L304,107.2 L304,103.3 L303,103.3 L303,76.4 L302,76.4 L302,65.3 L301,65.3 L301,65.3 L300,65.3 L300,65.3 L299,65.3 L299,65.3 L298,65.3 L298,92.7 L297,92.7 L297,105.0 L296,105.0 L296,95.1 L295,95.1 L295,65.3 L294,65.3 L294,65.3 L293,65.3 L293,65.3 L292,65.3 L292,68.3 L291,68.3 L291,73.2 L290,73.2 L290,96.8 L289,96.8 L289,100.8 L288,100.8 L288,87.5 L287,87.5 L287,65.3 L286,65.3 L286,65.3 L285,65.3 L285,65.3 L284,65.3 L284,65.3 L283,65.3 L283,80.0 L282,80.0 L282,99.9 L281,99.9 L281,98.6 L280,98.6 L280,77.3 L279,77.3 L279,65.3 L278,65.3 L278,65.3 L277,65.3 L277,65.3 L276,65.3 L276,65.3 L275,65.3 L275,86.7 L274,86.7 L274,100.0 L273,100.0 L273,96.8 L272,96.8 L272,69.7 L271,69.7 L271,65.3 L270,65.3 L270,65.3 L269,65.3 L269,65.3 L268,65.3 L268,71.5 L267,71.5 L267,90.1 L266,90.1 L266,96.3 L265,96.3 L265,87.2 L264,87.2 L264,65.3 L263,65.3 L263,65.3 L262,65.3 L262,65.3 L261,65.3 L261,65.3 L260,65.3 L260,76.7 L259,76.7 L259,94.6 L258,94.6 L258,100.4 L257,100.4 L257,78.5 L256,78.5 L256,65.3 L255,65.3 L255,65.3 L254,65.3 L254,65.3 L253,65.3 L253,65.3 L252,65.3 L252,82.0 L251,82.0 L251,99.4 L250,99.4 L250,92.5 L249,92.5 L249,72.8 L248,72.8 L248,65.3 L247,65.3 L247,65.3 L246,65.3 L246,65.3 L245,65.3 L245,69.4 L244,69.4 L244,91.6 L243,91.6 L243,95.0 L242,95.0 L242,89.1 L241,89.1 L241,65.3 L240,65.3 L240,68.3 L239,68.3 L239,65.3 L238,65.3 L238,65.3 L237,65.3 L237,76.3 L236,76.3 L236,96.4 L235,96.4 L235,96.6 L234,96.6 L234,78.8 L233,78.8 L233,65.3 L232,65.3 L232,65.3 L231,65.3 L231,65.3 L230,65.3 L230,65.3 L229,65.3 L229,82.1 L228,82.1 L228,99.4 L227,99.4 L227,98.5 L226,98.5 L226,73.9 L225,73.9 L225,65.3 L224,65.3 L224,68.3 L223,68.3 L223,65.3 L222,65.3 L222,65.3 L221,65.3 L221,84.5 L220,84.5 L220,96.5 L219,96.5 L219,89.0 L218,89.0 L218,65.3 L217,65.3 L217,65.3 L216,65.3 L216,65.3 L215,65.3 L215,65.3 L214,65.3 L214,72.0 L213,72.0 L213,88.1 L212,88.1 L212,89.2 L211,89.2 L211,81.0 L210,81.0 L210,65.3 L209,65.3 L209,65.3 L208,65.3 L208,65.3 L207,65.3 L207,65.3 L206,65.3 L206,77.7 L205,77.7 L205,89.4 L204,89.4 L204,88.1 L203,88.1 L203,73.4 L202,73.4 L202,65.3 L201,65.3 L201,65.3 L200,65.3 L200,65.3 L199,65.3 L199,65.3 L198,65.3 L198,81.6 L197,81.6 L197,88.5 L196,88.5 L196,83.0 L195,83.0 L195,68.7 L194,68.7 L194,65.3 L193,65.3 L193,65.3 L192,65.3 L192,65.3 L191,65.3 L191,69.1 L190,69.1 L190,84.0 L189,84.0 L189,82.9 L188,82.9 L188,76.0 L187,76.0 L187,65.3 L186,65.3 L186,65.3 L185,65.3 L185,65.3 L184,65.3 L184,65.3 L183,65.3 L183,72.8 L182,72.8 L182,81.8 L181,81.8 L181,79.8 L180,79.8 L180,71.1 L179,71.1 L179,65.3 L178,65.3 L178,65.3 L177,65.3 L177,65.3 L176,65.3 L176,65.3 L175,65.3 L175,70.1 L174,70.1 L174,74.3 L173,74.3 L173,72.6 L172,72.6 L172,66.7 L171,66.7 L171,65.3 L170,65.3 L170,65.3 L169,65.3 L169,65.3 L168,65.3 L168,65.3 L167,65.3 L167,67.1 L166,67.1 L166,68.3 L165,68.3 L165,65.6 L164,65.6 L164,68.3 L163,68.3 L163,65.3 L162,65.3 L162,65.3 L161,65.3 L161,65.3 L160,65.3 L160,65.3 L159,65.3 L159,68.3 L158,68.3 L158,65.3 L157,65.3 L157,65.3 L156,65.3 L156,65.3 L155,65.3 L155,65.3 L154,65.3 L154,65.3 L153,65.3 L153,65.3 L152,65.3 L152,65.3 L151,65.3 L151,65.3 L150,65.3 L150,65.3 L149,65.3 L149,65.3 L148,65.3 L148,65.3 L147,65.3 L147,68.3 L146,68.3 L146,65.3 L145,65.3 L145,65.3 L144,65.3 L144,65.3 L143,65.3 L143,65.3 L142,65.3 L142,65.3 L141,65.3 L141,65.3 L140,65.3 L140,65.3 L139,65.3 L139,65.3 L138,65.3 L138,65.3 L137,65.3 L137,65.3 L136,65.3 L136,65.3 L135,65.3 L135,65.3 L134,65.3 L134,65.3 L133,65.3 L133,65.3 L132,65.3 L132,65.3 L131,65.3 L131,65.3 L130,65.3 L130,65.3 L129,65.3 L129,65.3 L128,65.3 L128,65.3 L127,65.3 L127,65.3 L126,65.3 L126,68.3 L125,68.3 L125,65.3 L124,65.3 L124,65.3 L123,65.3 L123,65.3 L122,65.3 L122,65.3 L121,65.3 L121,65.3 L120,65.3 L120,65.3 L119,65.3 L119,65.3 L118,65.3 L118,65.3 L117,65.3 L117,65.3 L116,65.3 L116,65.3 L115,65.3 L115,65.3 L114,65.3 L114,65.3 L113,65.3 L113,68.3 L112,68.3 L112,65.3 L111,65.3 L111,65.3 L110,65.3 L110,65.3 L109,65.3 L109,65.3 L108,65.3 L108,65.3 L107,65.3 L107,65.3 L106,65.3 L106,65.3 L105,65.3 L105,65.3 L104,65.3 L104,65.3 L103,65.3 L103,65.3 L102,65.3 L102,65.3 L101,65.3 L101,65.3 L100,65.3 L100,65.3 L99,65.3 L99,65.3 L98,65.3 L98,65.3 L97,65.3 L97,65.3 L96,65.3 L96,65.3 L95,65.3 L95,65.3 L94,65.3 L94,65.3 L93,65.3 L93,65.3 L92,65.3 L92,65.3 L91,65.3 L91,65.3 L90,65.3 L90,65.3 L89,65.3 L89,65.3 L88,65.3 L88,65.3 L87,65.3 L87,65.3 L86,65.3 L86,68.3 L85,68.3 L85,65.3 L84,65.3 L84,65.3 L83,65.3 L83,65.3 L82,65.3 L82,65.3 L81,65.3 L81,65.3 L80,65.3 L80,65.3 L79,65.3 L79,65.3 L78,65.3 L78,68.3 L77,68.3 L77,65.3 L76,65.3 L76,65.3 L75,65.3 L75,65.3 L74,65.3 L74,65.3 L73,65.3 L73,65.3 L72,65.3 L72,65.3 L71,65.3 L71,65.3 L70,65.3 L70,65.3 L69,65.3 L69,65.3 L68,65.3 L68,65.3 L67,65.3 L67,65.3 L66,65.3 L66,65.3 L65,65.3 L65,65.3 L64,65.3 L64,65.3 L63,65.3 L63,65.3 L62,65.3 L62,65.3 L61,65.3 L61,65.3 L60,65.3 L60,65.3 L59,65.3 L59,65.3 L58,65.3 L58,65.3 L57,65.3 L57,65.3 L56,65.3 L56,65.3 L55,65.3 L55,65.3 L54,65.3 L54,65.3 L53,65.3 L53,65.3 L52,65.3 L52,65.3 L51,65.3 L51,65.3 L50,65.3 L50,65.3 L49,65.3 L49,65.3 L48,65.3 L48,65.3 L47,65.3 L47,65.3 L46,65.3 L46,65.3 L45,65.3 L45,65.3 L44,65.3 L44,65.3 L43,65.3 L43,65.3 L42,65.3 L42,65.3 L41,65.3 L41,65.3 L40,65.3 L40,65.3 L39,65.3 L39,65.3 L38,65.3 L38,65.3 L37,65.3 L37,65.3 L36,65.3 L36,65.3 L35,65.3 L35,65.3 L34,65.3 L34,65.3 L33,65.3 L33,65.3 L32,65.3 L32,65.3 L31,65.3 L31,65.3 L30,65.3 L30,65.3 L29,65.3 L29,65.3 L28,65.3 L28,65.3 L27,65.3 L27,65.3 L26,65.3 L26,65.3 L25,65.3 L25,65.3 L24,65.3 L24,65.3 L23,65.3 L23,65.3 L22,65.3 L22,65.3 L21,65.3 L21,65.3 L20,65.3 L20,68.3 L19,68.3 L19,65.3 L18,65.3 L18,65.3 L17,65.3 L17,65.3 L16,65.3 L16,68.3 L15,68.3 L15,65.3 L14,65.3 L14,68.3 L13,68.3 L13,65.3 L12,65.3 L12,65.3 L11,65.3 L11,65.3 L10,65.3 L10,65.3 L9,65.3 L9,65.3 L8,65.3 L8,65.3 L7,65.3 L7,68.3 L6,68.3 L6,65.3 L5,65.3 L5,65.3 L4,65.3 L4,65.3 L3,65.3 L3,65.3 L2,65.3 L2,65.3 L1,65.3 L1,65.3 L0,65.3Z" fill="#1b4272"/><rect x="60" y="0" width="2" height="120" fill="#66809a" opacity="0.9"/><rect x="120" y="0" width="2" height="120" fill="#66809a" opacity="0.9"/><rect x="181" y="0" width="2" height="120" fill="#66809a" opacity="0.9"/><rect x="241" y="0" width="2" height="120" fill="#66809a" opacity="0.9"/><rect x="302" y="0" width="2" height="120" fill="#66809a" opacity="0.9"/><rect x="362" y="0" width="2" height="120" fill="#66809a" opacity="0.9"/><rect x="423" y="0" width="2" height="120" fill="#66809a" opacity="0.9"/><rect x="483" y="0" width="2" height="120" fill="#66809a" opacity="0.9"/><rect x="544" y="0" width="2" height="120" fill="#66809a" opacity="0.9"/><rect x="605" y="0" width="2" height="120" fill="#66809a" opacity="0.9"/><rect x="665" y="0" width="2" height="120" fill="#66809a" opacity="0.9"/><rect x="726" y="0" width="2" height="120" fill="#66809a" opacity="0.9"/><rect x="786" y="0" width="2" height="120" fill="#66809a" opacity="0.9"/></svg>
<svg class="a" style="left:0;top:0" width="956" height="933"><g transform="translate(0.5,0)"><path d="M339,305 L339,319" fill="none" stroke="#9b9b9b" stroke-width="3" stroke-linecap="round"/><path d="M339,305 L339,319" fill="none" stroke="#b3b3b3" stroke-width="1"/><path d="M339,341 L339,362" fill="none" stroke="#9b9b9b" stroke-width="3" stroke-linecap="round"/><path d="M339,341 L339,362" fill="none" stroke="#b3b3b3" stroke-width="1"/><path d="M339,409 L339,415" fill="none" stroke="#9b9b9b" stroke-width="3" stroke-linecap="round"/><path d="M339,409 L339,415" fill="none" stroke="#b3b3b3" stroke-width="1"/><path d="M339,437 L339,447" fill="none" stroke="#9b9b9b" stroke-width="3" stroke-linecap="round"/><path d="M339,437 L339,447" fill="none" stroke="#b3b3b3" stroke-width="1"/><path d="M339,469 L339,484" fill="none" stroke="#9b9b9b" stroke-width="3" stroke-linecap="round"/><path d="M339,469 L339,484" fill="none" stroke="#b3b3b3" stroke-width="1"/><path d="M339,506 L339,517" fill="none" stroke="#9b9b9b" stroke-width="3" stroke-linecap="round"/><path d="M339,506 L339,517" fill="none" stroke="#b3b3b3" stroke-width="1"/><path d="M339,538 C342,550 360,552 400,558 L590,579 C615,583 631,590 631,600" fill="none" stroke="#9b9b9b" stroke-width="3" stroke-linecap="round"/><path d="M339,538 C342,550 360,552 400,558 L590,579 C615,583 631,590 631,600" fill="none" stroke="#b3b3b3" stroke-width="1"/><path d="M350,538 C352,546 360,548 380,552" fill="none" stroke="#9b9b9b" stroke-width="3" stroke-linecap="round"/><path d="M350,538 C352,546 360,548 380,552" fill="none" stroke="#b3b3b3" stroke-width="1"/><path d="M360,538 C362,600 322,640 318,711" fill="none" stroke="#9b9b9b" stroke-width="3" stroke-linecap="round"/><path d="M360,538 C362,600 322,640 318,711" fill="none" stroke="#b3b3b3" stroke-width="1"/><path d="M371,538 C372,570 380,590 379,618" fill="none" stroke="#9b9b9b" stroke-width="3" stroke-linecap="round"/><path d="M371,538 C372,570 380,590 379,618" fill="none" stroke="#b3b3b3" stroke-width="1"/><path d="M371,538 C375,565 405,578 440,592 C480,610 510,635 530,650 C570,678 600,700 602,720" fill="none" stroke="#9b9b9b" stroke-width="3" stroke-linecap="round"/><path d="M371,538 C375,565 405,578 440,592 C480,610 510,635 530,650 C570,678 600,700 602,720" fill="none" stroke="#b3b3b3" stroke-width="1"/><path d="M380,518 C405,485 460,405 499,344 C515,318 530,296 545,282 C553,274 560,270 565,271 C570,272 572,275 572,278" fill="none" stroke="#9b9b9b" stroke-width="3" stroke-linecap="round"/><path d="M380,518 C405,485 460,405 499,344 C515,318 530,296 545,282 C553,274 560,270 565,271 C570,272 572,275 572,278" fill="none" stroke="#b3b3b3" stroke-width="1"/><path d="M651,319 C651,330 630,325 614,302 C600,280 590,268 580,272 C574,275 572,276 572,278" fill="none" stroke="#9b9b9b" stroke-width="3" stroke-linecap="round"/><path d="M651,319 C651,330 630,325 614,302 C600,280 590,268 580,272 C574,275 572,276 572,278" fill="none" stroke="#b3b3b3" stroke-width="1"/><path d="M572,319 C572,330 590,320 605,310 C620,295 635,288 651,290 L651,297" fill="none" stroke="#9b9b9b" stroke-width="3" stroke-linecap="round"/><path d="M572,319 C572,330 590,320 605,310 C620,295 635,288 651,290 L651,297" fill="none" stroke="#b3b3b3" stroke-width="1"/><path d="M572,319 L572,325" fill="none" stroke="#9b9b9b" stroke-width="3" stroke-linecap="round"/><path d="M572,319 L572,325" fill="none" stroke="#b3b3b3" stroke-width="1"/><path d="M508,317 L508,325" fill="none" stroke="#9b9b9b" stroke-width="3" stroke-linecap="round"/><path d="M508,317 L508,325" fill="none" stroke="#b3b3b3" stroke-width="1"/><path d="M651,266 L651,270" fill="none" stroke="#9b9b9b" stroke-width="3" stroke-linecap="round"/><path d="M651,266 L651,270" fill="none" stroke="#b3b3b3" stroke-width="1"/><path d="M651,291 L651,297" fill="none" stroke="#9b9b9b" stroke-width="3" stroke-linecap="round"/><path d="M651,291 L651,297" fill="none" stroke="#b3b3b3" stroke-width="1"/><path d="M713,266 C713,280 714,285 714,297" fill="none" stroke="#9b9b9b" stroke-width="3" stroke-linecap="round"/><path d="M713,266 C713,280 714,285 714,297" fill="none" stroke="#b3b3b3" stroke-width="1"/><path d="M572,347 L572,353" fill="none" stroke="#9b9b9b" stroke-width="3" stroke-linecap="round"/><path d="M572,347 L572,353" fill="none" stroke="#b3b3b3" stroke-width="1"/><path d="M572,375 L572,381" fill="none" stroke="#9b9b9b" stroke-width="3" stroke-linecap="round"/><path d="M572,375 L572,381" fill="none" stroke="#b3b3b3" stroke-width="1"/><path d="M701,347 C701,370 631,360 631,381" fill="none" stroke="#9b9b9b" stroke-width="3" stroke-linecap="round"/><path d="M701,347 C701,370 631,360 631,381" fill="none" stroke="#b3b3b3" stroke-width="1"/><path d="M701,347 C705,352 718,346 718,353" fill="none" stroke="#9b9b9b" stroke-width="3" stroke-linecap="round"/><path d="M701,347 C705,352 718,346 718,353" fill="none" stroke="#b3b3b3" stroke-width="1"/><path d="M831,347 C831,365 800,360 772,363" fill="none" stroke="#9b9b9b" stroke-width="3" stroke-linecap="round"/><path d="M831,347 C831,365 800,360 772,363" fill="none" stroke="#b3b3b3" stroke-width="1"/><path d="M718,375 L718,381" fill="none" stroke="#9b9b9b" stroke-width="3" stroke-linecap="round"/><path d="M718,375 L718,381" fill="none" stroke="#b3b3b3" stroke-width="1"/><path d="M831,376 L831,381" fill="none" stroke="#9b9b9b" stroke-width="3" stroke-linecap="round"/><path d="M831,376 L831,381" fill="none" stroke="#b3b3b3" stroke-width="1"/><path d="M631,403 C631,410 600,404 575,405 C570,405 568,407 568,408" fill="none" stroke="#9b9b9b" stroke-width="3" stroke-linecap="round"/><path d="M631,403 C631,410 600,404 575,405 C570,405 568,407 568,408" fill="none" stroke="#b3b3b3" stroke-width="1"/><path d="M694,403 L694,471" fill="none" stroke="#9b9b9b" stroke-width="3" stroke-linecap="round"/><path d="M694,403 L694,471" fill="none" stroke="#b3b3b3" stroke-width="1"/><path d="M379,640 L379,651" fill="none" stroke="#9b9b9b" stroke-width="3" stroke-linecap="round"/><path d="M379,640 L379,651" fill="none" stroke="#b3b3b3" stroke-width="1"/><path d="M318,733 L318,767" fill="none" stroke="#9b9b9b" stroke-width="3" stroke-linecap="round"/><path d="M318,733 L318,767" fill="none" stroke="#b3b3b3" stroke-width="1"/><path d="M406,733 C406,745 340,735 338,742" fill="none" stroke="#9b9b9b" stroke-width="3" stroke-linecap="round"/><path d="M406,733 C406,745 340,735 338,742" fill="none" stroke="#b3b3b3" stroke-width="1"/><path d="M406,733 L406,742" fill="none" stroke="#9b9b9b" stroke-width="3" stroke-linecap="round"/><path d="M406,733 L406,742" fill="none" stroke="#b3b3b3" stroke-width="1"/><path d="M338,764 L338,767" fill="none" stroke="#9b9b9b" stroke-width="3" stroke-linecap="round"/><path d="M338,764 L338,767" fill="none" stroke="#b3b3b3" stroke-width="1"/><path d="M406,764 L406,767" fill="none" stroke="#9b9b9b" stroke-width="3" stroke-linecap="round"/><path d="M406,764 L406,767" fill="none" stroke="#b3b3b3" stroke-width="1"/><path d="M318,789 L318,792" fill="none" stroke="#9b9b9b" stroke-width="3" stroke-linecap="round"/><path d="M318,789 L318,792" fill="none" stroke="#b3b3b3" stroke-width="1"/><path d="M406,789 L406,792" fill="none" stroke="#9b9b9b" stroke-width="3" stroke-linecap="round"/><path d="M406,789 L406,792" fill="none" stroke="#b3b3b3" stroke-width="1"/><path d="M406,814 L406,817" fill="none" stroke="#9b9b9b" stroke-width="3" stroke-linecap="round"/><path d="M406,814 L406,817" fill="none" stroke="#b3b3b3" stroke-width="1"/><path d="M631,633 L631,645" fill="none" stroke="#9b9b9b" stroke-width="3" stroke-linecap="round"/><path d="M631,633 L631,645" fill="none" stroke="#b3b3b3" stroke-width="1"/><path d="M631,667 C631,700 553,690 553,720" fill="none" stroke="#9b9b9b" stroke-width="3" stroke-linecap="round"/><path d="M631,667 C631,700 553,690 553,720" fill="none" stroke="#b3b3b3" stroke-width="1"/><path d="M643,667 C640,720 630,740 631,772" fill="none" stroke="#9b9b9b" stroke-width="3" stroke-linecap="round"/><path d="M643,667 C640,720 630,740 631,772" fill="none" stroke="#b3b3b3" stroke-width="1"/><path d="M654,667 C656,720 668,740 668,772" fill="none" stroke="#9b9b9b" stroke-width="3" stroke-linecap="round"/><path d="M654,667 C656,720 668,740 668,772" fill="none" stroke="#b3b3b3" stroke-width="1"/><path d="M553,742 C553,765 660,745 668,772" fill="none" stroke="#9b9b9b" stroke-width="3" stroke-linecap="round"/><path d="M553,742 C553,765 660,745 668,772" fill="none" stroke="#b3b3b3" stroke-width="1"/><path d="M631,794 L631,803" fill="none" stroke="#9b9b9b" stroke-width="3" stroke-linecap="round"/><path d="M631,794 L631,803" fill="none" stroke="#b3b3b3" stroke-width="1"/><path d="M668,794 C668,805 640,795 631,803" fill="none" stroke="#9b9b9b" stroke-width="3" stroke-linecap="round"/><path d="M668,794 C668,805 640,795 631,803" fill="none" stroke="#b3b3b3" stroke-width="1"/><path d="M631,827 C631,845 700,830 745,830 C765,830 774,836 774,841" fill="none" stroke="#9b9b9b" stroke-width="3" stroke-linecap="round"/><path d="M631,827 C631,845 700,830 745,830 C765,830 774,836 774,841" fill="none" stroke="#b3b3b3" stroke-width="1"/><path d="M788,753 L788,758" fill="none" stroke="#9b9b9b" stroke-width="3" stroke-linecap="round"/><path d="M788,753 L788,758" fill="none" stroke="#b3b3b3" stroke-width="1"/><path d="M97,391 C97,403 110,402 110,380 L112,295 C112,266 127,264 127,278" fill="none" stroke="#9b9b9b" stroke-width="3" stroke-linecap="round"/><path d="M97,391 C97,403 110,402 110,380 L112,295 C112,266 127,264 127,278" fill="none" stroke="#b3b3b3" stroke-width="1"/><path d="M139,454 L139,460" fill="none" stroke="#9b9b9b" stroke-width="3" stroke-linecap="round"/><path d="M139,454 L139,460" fill="none" stroke="#b3b3b3" stroke-width="1"/><path d="M139,482 L139,489" fill="none" stroke="#9b9b9b" stroke-width="3" stroke-linecap="round"/><path d="M139,482 L139,489" fill="none" stroke="#b3b3b3" stroke-width="1"/><path d="M150,454 C155,470 174,475 174,489" fill="none" stroke="#9b9b9b" stroke-width="3" stroke-linecap="round"/><path d="M150,454 C155,470 174,475 174,489" fill="none" stroke="#b3b3b3" stroke-width="1"/><path d="M213,494 L213,501" fill="none" stroke="#9b9b9b" stroke-width="3" stroke-linecap="round"/><path d="M213,494 L213,501" fill="none" stroke="#b3b3b3" stroke-width="1"/><path d="M245,490 C245,500 230,503 200,507 L150,512 C130,515 124,520 124,527" fill="none" stroke="#9b9b9b" stroke-width="3" stroke-linecap="round"/><path d="M245,490 C245,500 230,503 200,507 L150,512 C130,515 124,520 124,527" fill="none" stroke="#b3b3b3" stroke-width="1"/><path d="M213,523 L213,525" fill="none" stroke="#9b9b9b" stroke-width="3" stroke-linecap="round"/><path d="M213,523 L213,525" fill="none" stroke="#b3b3b3" stroke-width="1"/><path d="M213,547 L213,550" fill="none" stroke="#9b9b9b" stroke-width="3" stroke-linecap="round"/><path d="M213,547 L213,550" fill="none" stroke="#b3b3b3" stroke-width="1"/><path d="M74,271 L74,278" fill="none" stroke="#dae3a0" stroke-width="3" stroke-linecap="round"/><path d="M74,271 L74,278" fill="none" stroke="#353535" stroke-width="2" stroke-dasharray="4 3.5"/><path d="M173,271 C173,276 160,274 140,274 C130,274 127,275 127,278" fill="none" stroke="#dae3a0" stroke-width="3" stroke-linecap="round"/><path d="M173,271 C173,276 160,274 140,274 C130,274 127,275 127,278" fill="none" stroke="#353535" stroke-width="2" stroke-dasharray="4 3.5"/><path d="M75,392 L75,409" fill="none" stroke="#dae3a0" stroke-width="3" stroke-linecap="round"/><path d="M75,392 L75,409" fill="none" stroke="#353535" stroke-width="2" stroke-dasharray="4 3.5"/><path d="M74,498 L74,527" fill="none" stroke="#dae3a0" stroke-width="3" stroke-linecap="round"/><path d="M74,498 L74,527" fill="none" stroke="#353535" stroke-width="2" stroke-dasharray="4 3.5"/><path d="M128,392 C128,420 159,470 159,489" fill="none" stroke="#dae3a0" stroke-width="3" stroke-linecap="round"/><path d="M128,392 C128,420 159,470 159,489" fill="none" stroke="#353535" stroke-width="2" stroke-dasharray="4 3.5"/><path d="M107,448 C118,460 124,475 124,489" fill="none" stroke="#dae3a0" stroke-width="3" stroke-linecap="round"/><path d="M107,448 C118,460 124,475 124,489" fill="none" stroke="#353535" stroke-width="2" stroke-dasharray="4 3.5"/><path d="M107,473 C112,480 115,485 117,489" fill="none" stroke="#dae3a0" stroke-width="3" stroke-linecap="round"/><path d="M107,473 C112,480 115,485 117,489" fill="none" stroke="#353535" stroke-width="2" stroke-dasharray="4 3.5"/><path d="M124,511 C124,525 170,515 174,527" fill="none" stroke="#dae3a0" stroke-width="3" stroke-linecap="round"/><path d="M124,511 C124,525 170,515 174,527" fill="none" stroke="#353535" stroke-width="2" stroke-dasharray="4 3.5"/><path d="M124,511 L124,527" fill="none" stroke="#dae3a0" stroke-width="3" stroke-linecap="round"/><path d="M124,511 L124,527" fill="none" stroke="#353535" stroke-width="2" stroke-dasharray="4 3.5"/><path d="M159,511 C159,522 110,515 101,527" fill="none" stroke="#dae3a0" stroke-width="3" stroke-linecap="round"/><path d="M159,511 C159,522 110,515 101,527" fill="none" stroke="#353535" stroke-width="2" stroke-dasharray="4 3.5"/><path d="M159,511 C160,520 174,520 174,527" fill="none" stroke="#dae3a0" stroke-width="3" stroke-linecap="round"/><path d="M159,511 C160,520 174,520 174,527" fill="none" stroke="#353535" stroke-width="2" stroke-dasharray="4 3.5"/><path d="M773,720 L773,758" fill="none" stroke="#dae3a0" stroke-width="3" stroke-linecap="round"/><path d="M773,720 L773,758" fill="none" stroke="#353535" stroke-width="2" stroke-dasharray="4 3.5"/><path d="M773,780 L774,841" fill="none" stroke="#dae3a0" stroke-width="3" stroke-linecap="round"/><path d="M773,780 L774,841" fill="none" stroke="#353535" stroke-width="2" stroke-dasharray="4 3.5"/><path d="M773,780 C779,790 800,785 800,796" fill="none" stroke="#dae3a0" stroke-width="3" stroke-linecap="round"/><path d="M773,780 C779,790 800,785 800,796" fill="none" stroke="#353535" stroke-width="2" stroke-dasharray="4 3.5"/></g></svg>
<svg class="a" style="left:65px;top:278px" width="41" height="114"><defs><pattern id="hd" width="5" height="5" patternUnits="userSpaceOnUse" patternTransform="rotate(45)"><rect width="5" height="5" fill="#3e3e3e"/><rect width="2" height="5" fill="#5a5a5a"/></pattern><pattern id="hl" width="5" height="5" patternUnits="userSpaceOnUse" patternTransform="rotate(45)"><rect width="5" height="5" fill="#cfe4e8"/><rect width="1.3" height="5" fill="#2a3a3e"/></pattern></defs><rect x="0" y="0" width="41" height="114" fill="#2a2a2a"/><rect x="1" y="1" width="39" height="45" fill="url(#hd)"/><rect x="1" y="47" width="39" height="4" fill="#cfe4e8"/><rect x="1" y="52" width="39" height="61" fill="url(#hl)"/></svg>
<svg class="a" style="left:119px;top:278px" width="41" height="114"><defs><pattern id="hd" width="5" height="5" patternUnits="userSpaceOnUse" patternTransform="rotate(45)"><rect width="5" height="5" fill="#3e3e3e"/><rect width="2" height="5" fill="#5a5a5a"/></pattern><pattern id="hl" width="5" height="5" patternUnits="userSpaceOnUse" patternTransform="rotate(45)"><rect width="5" height="5" fill="#cfe4e8"/><rect width="1.3" height="5" fill="#2a3a3e"/></pattern></defs><rect x="0" y="0" width="41" height="114" fill="#2a2a2a"/><rect x="1" y="1" width="39" height="45" fill="url(#hd)"/><rect x="1" y="47" width="39" height="4" fill="#cfe4e8"/><rect x="1" y="52" width="39" height="61" fill="url(#hl)"/></svg>
<svg class="a" style="left:65px;top:409px" width="42" height="89"><rect width="42" height="89" fill="#2e2e2e"/><rect x="4" y="3.00" width="33" height="5.5" fill="#5a5a5a"/><rect x="4" y="9.35" width="33" height="5.5" fill="#5a5a5a"/><rect x="4" y="15.70" width="33" height="5.5" fill="#5a5a5a"/><rect x="4" y="22.05" width="33" height="5.5" fill="#5a5a5a"/><rect x="4" y="28.40" width="33" height="5.5" fill="#5a5a5a"/><rect x="4" y="34.75" width="33" height="5.5" fill="#5a5a5a"/><rect x="4" y="41.10" width="33" height="5.5" fill="#5a5a5a"/><rect x="4" y="47.45" width="33" height="5.5" fill="#5a5a5a"/><rect x="4" y="53.80" width="33" height="5.5" fill="#5a5a5a"/><rect x="4" y="60.15" width="33" height="5.5" fill="#a8c000"/><rect x="4" y="66.50" width="33" height="5.5" fill="#00a000"/><rect x="4" y="72.85" width="33" height="5.5" fill="#00a000"/><rect x="4" y="79.20" width="33" height="5.5" fill="#00a000"/></svg>
<div class="a" style="left:65px;top:527px;width:45px;height:45px;background:#2e2e2e"></div>
<svg class="a" style="left:65px;top:527px" width="45" height="45"><path d="M8.9,16.2 L15.9,16.2 L23.9,9.2 L23.9,35.7 L15.9,29.2 L8.9,29.2 Z" fill="#cfe4e8"/><path d="M25.40,19.61 A3.8,3.8 0 0 1 25.40,26.19" fill="none" stroke="#cfe4e8" stroke-width="2.6"/><path d="M27.86,16.67 A7.6,7.6 0 0 1 27.86,29.13" fill="none" stroke="#cfe4e8" stroke-width="2.6"/><path d="M30.83,14.17 A11.4,11.4 0 0 1 30.83,31.63" fill="none" stroke="#cfe4e8" stroke-width="2.6"/></svg>
<div class="a" style="left:764px;top:675px;width:45px;height:45px;background:#2e2e2e"></div>
<svg class="a" style="left:764px;top:675px" width="45" height="45"><rect x="17.9" y="9.2" width="9.1" height="17.2" rx="4.55" fill="#cfe4e8"/><path d="M15.6,22 C15.6,27 18,29.6 22.5,29.6 C27,29.6 29.4,27 29.4,22" fill="none" stroke="#cfe4e8" stroke-width="3"/><rect x="20.3" y="29" width="4.6" height="4.8" fill="#cfe4e8"/><rect x="17.1" y="33.3" width="10.9" height="2.8" fill="#cfe4e8"/></svg>
<div class="a" style="left:563px;top:408px;width:311px;height:56px;background:#595959"></div>
<div class="a" style="left:563px;top:408px;width:5px;height:56px;background:#2e2e2e"></div>
<div class="a" style="left:869px;top:408px;width:5px;height:56px;background:#2e2e2e"></div>
<div class="a" style="left:568px;top:408px;width:10px;height:56px;background:#e9a051"></div>
<div class="a" style="left:578px;top:408px;width:1px;height:56px;background:#6a4a20"></div>
<div class="a" style="left:579px;top:408px;width:6px;height:56px;background:#e9a051"></div>
<svg class="a" style="left:794px;top:796px" width="80" height="37"><rect width="80" height="37" fill="#2e2e2e"/><rect x="4.00" y="4" width="4.8" height="30" fill="#00a000"/><rect x="9.64" y="4" width="4.8" height="30" fill="#00a000"/><rect x="15.28" y="4" width="4.8" height="30" fill="#00a000"/><rect x="20.92" y="4" width="4.8" height="30" fill="#98c000"/><rect x="26.56" y="4" width="4.8" height="30" fill="#98c000"/><rect x="32.20" y="4" width="4.8" height="30" fill="#98c000"/><rect x="37.84" y="4" width="4.8" height="30" fill="#e0d800"/><rect x="43.48" y="4" width="4.8" height="30" fill="#e0d800"/><rect x="49.12" y="4" width="4.8" height="30" fill="#e0d800"/><rect x="54.76" y="4" width="4.8" height="30" fill="#5a5a5a"/><rect x="60.40" y="4" width="4.8" height="30" fill="#5a5a5a"/><rect x="66.04" y="4" width="4.8" height="30" fill="#5a5a5a"/><rect x="71.68" y="4" width="4.8" height="30" fill="#ff3000"/></svg>
<svg class="a" style="left:130px;top:419px" width="35" height="35"><rect width="35" height="35" fill="#2e2e2e"/><path d="M8.575,8.575 L26.425,26.425 M26.425,8.575 L8.575,26.425" stroke="#5c5c5c" stroke-width="2.3"/></svg>
<svg class="a" style="left:204px;top:466px" width="28" height="28"><rect width="28" height="28" fill="#2e2e2e"/><path d="M6.859999999999999,6.859999999999999 L21.14,21.14 M21.14,6.859999999999999 L6.859999999999999,21.14" stroke="#5c5c5c" stroke-width="2.1"/></svg>
<svg class="a" style="left:330px;top:281px" width="24" height="24"><rect width="24" height="24" fill="#2e2e2e"/><path d="M5.88,5.88 L18.12,18.12 M18.12,5.88 L5.88,18.12" stroke="#cfe4e8" stroke-width="2.1"/></svg>
<svg class="a" style="left:622px;top:803px" width="24" height="24"><rect width="24" height="24" fill="#2e2e2e"/><path d="M5.88,5.88 L18.12,18.12 M18.12,5.88 L5.88,18.12" stroke="#5c5c5c" stroke-width="2.1"/></svg>
<svg class="a" style="left:330px;top:362px" width="47" height="47"><rect width="47" height="47" fill="#2e2e2e"/><circle cx="23.5" cy="23.5" r="14.29" fill="none" stroke="#5a5a5a" stroke-width="3.38"/></svg>
<svg class="a" style="left:499px;top:288px" width="30" height="30"><rect width="30" height="30" fill="#2e2e2e"/><circle cx="15.0" cy="15.0" r="9.12" fill="none" stroke="#5a5a5a" stroke-width="2.16"/></svg>
<svg class="a" style="left:563px;top:278px" width="41" height="41"><rect width="41" height="41" fill="#2e2e2e"/><circle cx="20.5" cy="20.5" r="12.46" fill="none" stroke="#5a5a5a" stroke-width="2.95"/></svg>
<svg class="a" style="left:622px;top:600px" width="33" height="33"><rect width="33" height="33" fill="#2e2e2e"/><circle cx="16.5" cy="16.5" r="10.03" fill="none" stroke="#5a5a5a" stroke-width="2.38"/></svg>
<div class="ob" style="left:65px;top:249px;width:84px">receive~ ch_L</div>
<div class="ob" style="left:164px;top:249px;width:86px">receive~ ch_R</div>
<div class="ob" style="left:130px;top:460px;width:30px">!- 1</div>
<div class="ob" style="left:115px;top:489px;width:34px">*~ 1.</div>
<div class="ob" style="left:150px;top:489px;width:34px">*~ 1.</div>
<div class="ob" style="left:115px;top:527px;width:69px">sfrecord~ 2</div>
<div class="ob" style="left:204px;top:501px;width:77px">clocker 1000</div>
<div class="ob" style="left:204px;top:525px;width:42px">/ 1000</div>
<div class="ob" style="left:330px;top:319px;width:69px">metro 3000</div>
<div class="ob" style="left:330px;top:415px;width:79px">random 2500</div>
<div class="ob" style="left:330px;top:447px;width:39px">+ 500</div>
<div class="ob" style="left:330px;top:517px;width:50px">t b b b i</div>
<div class="ob" style="left:499px;top:325px;width:58px">s stopper</div>
<div class="ob" style="left:563px;top:325px;width:278px">t b b b</div>
<div class="ob" style="left:642px;top:244px;width:56px">r stopper</div>
<div class="ob" style="left:704px;top:244px;width:60px">r metabar</div>
<div class="ob" style="left:642px;top:297px;width:81px">delay 30000</div>
<div class="ob" style="left:563px;top:381px;width:52px">s starter</div>
<div class="ob" style="left:622px;top:381px;width:81px">p accel_block</div>
<div class="ob" style="left:709px;top:353px;width:63px">p rit_block</div>
<div class="ob" style="left:709px;top:381px;width:105px">p amplitude_block</div>
<div class="ob" style="left:822px;top:381px;width:52px">s starter</div>
<div class="ob" style="left:370px;top:618px;width:77px">prepend size</div>
<div class="ob" style="left:370px;top:651px;width:104px">buffer~ clip1 1000</div>
<div class="ob" style="left:309px;top:711px;width:137px">info~ clip1</div>
<div class="ob" style="left:329px;top:742px;width:48px">/ 1000.</div>
<div class="ob" style="left:397px;top:742px;width:30px">* 4.</div>
<div class="ob" style="left:309px;top:767px;width:40px">* 1.</div>
<div class="ob" style="left:397px;top:767px;width:60px">* 3.92083</div>
<div class="ob" style="left:397px;top:817px;width:62px">s metabar</div>
<div class="ob" style="left:622px;top:645px;width:42px">t b b b</div>
<div class="ob" style="left:544px;top:720px;width:67px">delay 1000</div>
<div class="ob" style="left:764px;top:758px;width:34px">*~ 8.</div>
<div class="ob" style="left:765px;top:841px;width:78px">record~ clip1</div>
<div class="ms" style="left:65px;top:73px;width:53px;height:22px;line-height:23px">set clip1</div>
<div class="ms" style="left:236px;top:469px;width:35px;height:21px;line-height:22px">open</div>
<div class="ms" style="left:642px;top:270px;width:31px;height:21px;line-height:22px">stop</div>
<div class="ms" style="left:563px;top:353px;width:29px;height:22px;line-height:23px">0</div>
<div class="ms" style="left:822px;top:353px;width:44px;height:23px;line-height:24px">loop 1</div>
<div class="ms" style="left:622px;top:772px;width:29px;height:22px;line-height:23px">1</div>
<div class="ms" style="left:659px;top:772px;width:29px;height:22px;line-height:23px">0</div>
<div class="nb" style="left:204px;top:550px;width:46px;height:22px;line-height:22px;padding-left:12px">0</div>
<svg class="a" style="left:204px;top:550px" width="12" height="22"><path d="M3.5,4.5 L10,11.0 L3.5,17.5 Z" fill="#6b6b6b"/></svg>
<div class="nb" style="left:330px;top:484px;width:50px;height:22px;line-height:22px;padding-left:12px">569</div>
<svg class="a" style="left:330px;top:484px" width="12" height="22"><path d="M3.5,4.5 L10,11.0 L3.5,17.5 Z" fill="#6b6b6b"/></svg>
<div class="nb" style="left:704px;top:270px;width:97px;height:22px;line-height:22px;padding-left:12px">29908.09124</div>
<svg class="a" style="left:704px;top:270px" width="12" height="22"><path d="M3.5,4.5 L10,11.0 L3.5,17.5 Z" fill="#6b6b6b"/></svg>
<div class="nb" style="left:684px;top:471px;width:71px;height:22px;line-height:22px;padding-left:12px">-5.550623</div>
<svg class="a" style="left:684px;top:471px" width="12" height="22"><path d="M3.5,4.5 L10,11.0 L3.5,17.5 Z" fill="#6b6b6b"/></svg>
<div class="nb" style="left:309px;top:792px;width:65px;height:23px;line-height:23px;padding-left:12px"><span style="font-size:13px">91536</span></div>
<svg class="a" style="left:309px;top:792px" width="12" height="23"><path d="M3.5,5.0 L10,11.5 L3.5,18.0 Z" fill="#6b6b6b"/></svg>
<div class="nb" style="left:397px;top:792px;width:94px;height:22px;line-height:22px;padding-left:12px">29908.09124</div>
<svg class="a" style="left:397px;top:792px" width="12" height="22"><path d="M3.5,4.5 L10,11.0 L3.5,17.5 Z" fill="#6b6b6b"/></svg>
<div class="nb" style="left:779px;top:732px;width:50px;height:21px;line-height:21px;padding-left:12px">0.</div>
<svg class="a" style="left:779px;top:732px" width="12" height="21"><path d="M3.5,4.0 L10,10.5 L3.5,17.0 Z" fill="#6b6b6b"/></svg>
<svg class="a" style="left:0;top:0" width="956" height="933"><g transform="translate(0.5,0)"><path d="M70.8,249 A3.2,3 0 0 0 77.2,249 Z" fill="#a8a8a8" stroke="#b8b8b8" stroke-width="0.8"/><path d="M70.8,271 A3.2,3 0 0 1 77.2,271 Z" fill="#1a2200" stroke="#b8d050" stroke-width="0.8"/><path d="M169.8,249 A3.2,3 0 0 0 176.2,249 Z" fill="#a8a8a8" stroke="#b8b8b8" stroke-width="0.8"/><path d="M169.8,271 A3.2,3 0 0 1 176.2,271 Z" fill="#1a2200" stroke="#b8d050" stroke-width="0.8"/><path d="M136.8,460 A3.2,3 0 0 0 143.2,460 Z" fill="#4a1010" stroke="#e0908a" stroke-width="0.8"/><path d="M146.8,460 A3.2,3 0 0 0 153.2,460 Z" fill="#a8a8a8" stroke="#b8b8b8" stroke-width="0.8"/><path d="M136.8,482 A3.2,3 0 0 1 143.2,482 Z" fill="#1a2200" stroke="#b8d050" stroke-width="0.8"/><path d="M120.8,489 A3.2,3 0 0 0 127.2,489 Z" fill="#4a1010" stroke="#e0908a" stroke-width="0.8"/><path d="M135.8,489 A3.2,3 0 0 0 142.2,489 Z" fill="#4a1010" stroke="#e0908a" stroke-width="0.8"/><path d="M120.8,511 A3.2,3 0 0 1 127.2,511 Z" fill="#1a2200" stroke="#b8d050" stroke-width="0.8"/><path d="M155.8,489 A3.2,3 0 0 0 162.2,489 Z" fill="#4a1010" stroke="#e0908a" stroke-width="0.8"/><path d="M170.8,489 A3.2,3 0 0 0 177.2,489 Z" fill="#4a1010" stroke="#e0908a" stroke-width="0.8"/><path d="M155.8,511 A3.2,3 0 0 1 162.2,511 Z" fill="#1a2200" stroke="#b8d050" stroke-width="0.8"/><path d="M120.8,527 A3.2,3 0 0 0 127.2,527 Z" fill="#4a1010" stroke="#e0908a" stroke-width="0.8"/><path d="M170.8,527 A3.2,3 0 0 0 177.2,527 Z" fill="#4a1010" stroke="#e0908a" stroke-width="0.8"/><path d="M120.8,549 A3.2,3 0 0 1 127.2,549 Z" fill="#a8a8a8" stroke="#b8b8b8" stroke-width="0.8"/><path d="M209.8,501 A3.2,3 0 0 0 216.2,501 Z" fill="#4a1010" stroke="#e0908a" stroke-width="0.8"/><path d="M268.8,501 A3.2,3 0 0 0 275.2,501 Z" fill="#a8a8a8" stroke="#b8b8b8" stroke-width="0.8"/><path d="M209.8,523 A3.2,3 0 0 1 216.2,523 Z" fill="#1a2200" stroke="#b8d050" stroke-width="0.8"/><path d="M209.8,525 A3.2,3 0 0 0 216.2,525 Z" fill="#4a1010" stroke="#e0908a" stroke-width="0.8"/><path d="M233.8,525 A3.2,3 0 0 0 240.2,525 Z" fill="#a8a8a8" stroke="#b8b8b8" stroke-width="0.8"/><path d="M209.8,547 A3.2,3 0 0 1 216.2,547 Z" fill="#1a2200" stroke="#b8d050" stroke-width="0.8"/><path d="M335.8,319 A3.2,3 0 0 0 342.2,319 Z" fill="#4a1010" stroke="#e0908a" stroke-width="0.8"/><path d="M384.8,319 A3.2,3 0 0 0 391.2,319 Z" fill="#a8a8a8" stroke="#b8b8b8" stroke-width="0.8"/><path d="M335.8,341 A3.2,3 0 0 1 342.2,341 Z" fill="#1a2200" stroke="#b8d050" stroke-width="0.8"/><path d="M335.8,415 A3.2,3 0 0 0 342.2,415 Z" fill="#4a1010" stroke="#e0908a" stroke-width="0.8"/><path d="M395.8,415 A3.2,3 0 0 0 402.2,415 Z" fill="#a8a8a8" stroke="#b8b8b8" stroke-width="0.8"/><path d="M335.8,437 A3.2,3 0 0 1 342.2,437 Z" fill="#1a2200" stroke="#b8d050" stroke-width="0.8"/><path d="M335.8,447 A3.2,3 0 0 0 342.2,447 Z" fill="#4a1010" stroke="#e0908a" stroke-width="0.8"/><path d="M355.8,447 A3.2,3 0 0 0 362.2,447 Z" fill="#a8a8a8" stroke="#b8b8b8" stroke-width="0.8"/><path d="M335.8,469 A3.2,3 0 0 1 342.2,469 Z" fill="#1a2200" stroke="#b8d050" stroke-width="0.8"/><path d="M335.8,517 A3.2,3 0 0 0 342.2,517 Z" fill="#4a1010" stroke="#e0908a" stroke-width="0.8"/><path d="M335.8,539 A3.2,3 0 0 1 342.2,539 Z" fill="#1a2200" stroke="#b8d050" stroke-width="0.8"/><path d="M346.8,539 A3.2,3 0 0 1 353.2,539 Z" fill="#1a2200" stroke="#b8d050" stroke-width="0.8"/><path d="M356.8,539 A3.2,3 0 0 1 363.2,539 Z" fill="#1a2200" stroke="#b8d050" stroke-width="0.8"/><path d="M367.8,539 A3.2,3 0 0 1 374.2,539 Z" fill="#1a2200" stroke="#b8d050" stroke-width="0.8"/><path d="M504.8,325 A3.2,3 0 0 0 511.2,325 Z" fill="#4a1010" stroke="#e0908a" stroke-width="0.8"/><path d="M568.8,325 A3.2,3 0 0 0 575.2,325 Z" fill="#4a1010" stroke="#e0908a" stroke-width="0.8"/><path d="M568.8,347 A3.2,3 0 0 1 575.2,347 Z" fill="#1a2200" stroke="#b8d050" stroke-width="0.8"/><path d="M697.8,347 A3.2,3 0 0 1 704.2,347 Z" fill="#1a2200" stroke="#b8d050" stroke-width="0.8"/><path d="M827.8,347 A3.2,3 0 0 1 834.2,347 Z" fill="#1a2200" stroke="#b8d050" stroke-width="0.8"/><path d="M647.8,266 A3.2,3 0 0 1 654.2,266 Z" fill="#1a2200" stroke="#b8d050" stroke-width="0.8"/><path d="M709.8,266 A3.2,3 0 0 1 716.2,266 Z" fill="#1a2200" stroke="#b8d050" stroke-width="0.8"/><path d="M647.8,297 A3.2,3 0 0 0 654.2,297 Z" fill="#4a1010" stroke="#e0908a" stroke-width="0.8"/><path d="M710.8,297 A3.2,3 0 0 0 717.2,297 Z" fill="#10303a" stroke="#70c0d8" stroke-width="0.8"/><path d="M647.8,319 A3.2,3 0 0 1 654.2,319 Z" fill="#1a2200" stroke="#b8d050" stroke-width="0.8"/><path d="M568.8,381 A3.2,3 0 0 0 575.2,381 Z" fill="#4a1010" stroke="#e0908a" stroke-width="0.8"/><path d="M627.8,381 A3.2,3 0 0 0 634.2,381 Z" fill="#4a1010" stroke="#e0908a" stroke-width="0.8"/><path d="M627.8,403 A3.2,3 0 0 1 634.2,403 Z" fill="#1a2200" stroke="#b8d050" stroke-width="0.8"/><path d="M690.8,403 A3.2,3 0 0 1 697.2,403 Z" fill="#1a2200" stroke="#b8d050" stroke-width="0.8"/><path d="M714.8,353 A3.2,3 0 0 0 721.2,353 Z" fill="#4a1010" stroke="#e0908a" stroke-width="0.8"/><path d="M714.8,375 A3.2,3 0 0 1 721.2,375 Z" fill="#1a2200" stroke="#b8d050" stroke-width="0.8"/><path d="M714.8,381 A3.2,3 0 0 0 721.2,381 Z" fill="#4a1010" stroke="#e0908a" stroke-width="0.8"/><path d="M827.8,381 A3.2,3 0 0 0 834.2,381 Z" fill="#4a1010" stroke="#e0908a" stroke-width="0.8"/><path d="M375.8,618 A3.2,3 0 0 0 382.2,618 Z" fill="#4a1010" stroke="#e0908a" stroke-width="0.8"/><path d="M375.8,640 A3.2,3 0 0 1 382.2,640 Z" fill="#1a2200" stroke="#b8d050" stroke-width="0.8"/><path d="M375.8,651 A3.2,3 0 0 0 382.2,651 Z" fill="#4a1010" stroke="#e0908a" stroke-width="0.8"/><path d="M375.8,673 A3.2,3 0 0 1 382.2,673 Z" fill="#a8a8a8" stroke="#b8b8b8" stroke-width="0.8"/><path d="M460.8,673 A3.2,3 0 0 1 467.2,673 Z" fill="#a8a8a8" stroke="#b8b8b8" stroke-width="0.8"/><path d="M314.8,711 A3.2,3 0 0 0 321.2,711 Z" fill="#4a1010" stroke="#e0908a" stroke-width="0.8"/><path d="M314.8,733 A3.2,3 0 0 1 321.2,733 Z" fill="#1a2200" stroke="#b8d050" stroke-width="0.8"/><path d="M330.3,733 A3.2,3 0 0 1 336.7,733 Z" fill="#a8a8a8" stroke="#b8b8b8" stroke-width="0.8"/><path d="M344.5,733 A3.2,3 0 0 1 350.9,733 Z" fill="#a8a8a8" stroke="#b8b8b8" stroke-width="0.8"/><path d="M358.7,733 A3.2,3 0 0 1 365.09999999999997,733 Z" fill="#a8a8a8" stroke="#b8b8b8" stroke-width="0.8"/><path d="M373.8,733 A3.2,3 0 0 1 380.2,733 Z" fill="#a8a8a8" stroke="#b8b8b8" stroke-width="0.8"/><path d="M388.0,733 A3.2,3 0 0 1 394.4,733 Z" fill="#a8a8a8" stroke="#b8b8b8" stroke-width="0.8"/><path d="M403.1,733 A3.2,3 0 0 1 409.5,733 Z" fill="#1a2200" stroke="#b8d050" stroke-width="0.8"/><path d="M417.3,733 A3.2,3 0 0 1 423.7,733 Z" fill="#a8a8a8" stroke="#b8b8b8" stroke-width="0.8"/><path d="M433.2,733 A3.2,3 0 0 1 439.59999999999997,733 Z" fill="#a8a8a8" stroke="#b8b8b8" stroke-width="0.8"/><path d="M334.8,742 A3.2,3 0 0 0 341.2,742 Z" fill="#4a1010" stroke="#e0908a" stroke-width="0.8"/><path d="M363.8,742 A3.2,3 0 0 0 370.2,742 Z" fill="#a8a8a8" stroke="#b8b8b8" stroke-width="0.8"/><path d="M334.8,764 A3.2,3 0 0 1 341.2,764 Z" fill="#1a2200" stroke="#b8d050" stroke-width="0.8"/><path d="M402.8,742 A3.2,3 0 0 0 409.2,742 Z" fill="#4a1010" stroke="#e0908a" stroke-width="0.8"/><path d="M413.8,742 A3.2,3 0 0 0 420.2,742 Z" fill="#a8a8a8" stroke="#b8b8b8" stroke-width="0.8"/><path d="M402.8,764 A3.2,3 0 0 1 409.2,764 Z" fill="#1a2200" stroke="#b8d050" stroke-width="0.8"/><path d="M314.8,767 A3.2,3 0 0 0 321.2,767 Z" fill="#4a1010" stroke="#e0908a" stroke-width="0.8"/><path d="M334.8,767 A3.2,3 0 0 0 341.2,767 Z" fill="#10303a" stroke="#70c0d8" stroke-width="0.8"/><path d="M314.8,789 A3.2,3 0 0 1 321.2,789 Z" fill="#1a2200" stroke="#b8d050" stroke-width="0.8"/><path d="M402.8,767 A3.2,3 0 0 0 409.2,767 Z" fill="#4a1010" stroke="#e0908a" stroke-width="0.8"/><path d="M443.8,767 A3.2,3 0 0 0 450.2,767 Z" fill="#a8a8a8" stroke="#b8b8b8" stroke-width="0.8"/><path d="M402.8,789 A3.2,3 0 0 1 409.2,789 Z" fill="#1a2200" stroke="#b8d050" stroke-width="0.8"/><path d="M402.8,817 A3.2,3 0 0 0 409.2,817 Z" fill="#4a1010" stroke="#e0908a" stroke-width="0.8"/><path d="M627.8,645 A3.2,3 0 0 0 634.2,645 Z" fill="#4a1010" stroke="#e0908a" stroke-width="0.8"/><path d="M627.8,667 A3.2,3 0 0 1 634.2,667 Z" fill="#1a2200" stroke="#b8d050" stroke-width="0.8"/><path d="M639.8,667 A3.2,3 0 0 1 646.2,667 Z" fill="#1a2200" stroke="#b8d050" stroke-width="0.8"/><path d="M650.8,667 A3.2,3 0 0 1 657.2,667 Z" fill="#1a2200" stroke="#b8d050" stroke-width="0.8"/><path d="M549.8,720 A3.2,3 0 0 0 556.2,720 Z" fill="#4a1010" stroke="#e0908a" stroke-width="0.8"/><path d="M598.8,720 A3.2,3 0 0 0 605.2,720 Z" fill="#10303a" stroke="#70c0d8" stroke-width="0.8"/><path d="M549.8,742 A3.2,3 0 0 1 556.2,742 Z" fill="#1a2200" stroke="#b8d050" stroke-width="0.8"/><path d="M769.8,758 A3.2,3 0 0 0 776.2,758 Z" fill="#4a1010" stroke="#e0908a" stroke-width="0.8"/><path d="M784.8,758 A3.2,3 0 0 0 791.2,758 Z" fill="#4a1010" stroke="#e0908a" stroke-width="0.8"/><path d="M769.8,780 A3.2,3 0 0 1 776.2,780 Z" fill="#1a2200" stroke="#b8d050" stroke-width="0.8"/><path d="M770.8,841 A3.2,3 0 0 0 777.2,841 Z" fill="#4a1010" stroke="#e0908a" stroke-width="0.8"/><path d="M801.8,841 A3.2,3 0 0 0 808.2,841 Z" fill="#a8a8a8" stroke="#b8b8b8" stroke-width="0.8"/><path d="M830.8,841 A3.2,3 0 0 0 837.2,841 Z" fill="#a8a8a8" stroke="#b8b8b8" stroke-width="0.8"/><path d="M770.8,863 A3.2,3 0 0 1 777.2,863 Z" fill="#a8a8a8" stroke="#b8b8b8" stroke-width="0.8"/></g></svg>
<div class="cm" style="left:169px;top:422px">1=UP/DOWN<br>0=UP(mono)</div>
<div class="cm" style="left:760px;top:474px">[-6] to [+6]</div>
<div class="cm" style="left:320px;top:821px">samples</div>
<svg class="a" style="left:0;top:0" width="956" height="933"><g fill="none" stroke="#5e5e5e" stroke-width="1.3"><rect x="72.6" y="31.6" width="15.5" height="15.5"/><path d="M73,35.2 H88 M73,43.5 H88"/><rect x="102.2" y="31.6" width="15.5" height="15.5"/><rect x="160.4" y="31.6" width="15.5" height="15.5"/><path d="M163.5,34.7 L172.8,44 M172.8,34.7 L163.5,44"/><rect x="189" y="31.6" width="15.5" height="15.5"/><circle cx="196.7" cy="39.3" r="3.3"/><rect x="217.6" y="31.6" width="15.5" height="15.5"/><rect x="246.6" y="31.6" width="15.5" height="15.5"/><path d="M279.5,45.5 A7.2,7.2 0 1 1 288.5,45.5" stroke-width="1.8"/><path d="M283.5,40.5 L287.5,34.5" stroke-width="1.8"/></g><g fill="#5e5e5e"><path d="M106.8,43.2 L108.3,38 L109.3,38 L107.8,43.2Z M109.6,43.2 L111.1,38 L112.1,38 L110.6,43.2Z M112.4,43.2 L113.9,38 L114.9,38 L113.4,43.2Z"/><rect x="130.3" y="34.5" width="16.8" height="9.3" rx="1.2"/><path d="M139.5,43.5 L142.5,46.8 L143.5,43.5Z"/><path d="M220.3,35.8 L226.3,39.3 L220.3,42.8Z"/><rect x="247" y="38.6" width="15" height="1.5"/><rect x="310.8" y="33.3" width="3.2" height="11.7"/><rect x="306.6" y="37.5" width="11.7" height="3.2"/><path d="M193.7,51 H199.7 L196.7,54Z"/><path d="M222.3,51 H228.3 L225.3,54Z"/><path d="M251.3,51 H257.3 L254.3,54Z"/><path d="M280.5,51 H286.5 L283.5,54Z"/><path d="M309.4,51 H315.4 L312.4,54Z"/><path d="M350.5,39.5 L364.5,39.5 L358,46.5Z"/><circle cx="365.8" cy="44.3" r="1.5"/></g><path d="M350.5,39.5 L357.5,32.5 L364.5,39.5 L358,46.5Z M353,36 C354,31 361,31 362,36" fill="none" stroke="#5e5e5e" stroke-width="1.3"/><path d="M472,56 L478,49.5 L484,56Z" fill="#5a5a5a"/><rect x="899.00" y="34.0" width="2.1" height="2.8" fill="#f0f0f0"/><rect x="902.05" y="34.0" width="2.1" height="2.8" fill="#f0f0f0"/><rect x="905.10" y="34.0" width="2.1" height="2.8" fill="#d8d020"/><rect x="908.15" y="34.0" width="2.1" height="2.8" fill="#f0f0f0"/><rect x="911.20" y="34.0" width="2.1" height="2.8" fill="#f0f0f0"/><rect x="914.25" y="34.0" width="2.1" height="2.8" fill="#f0f0f0"/><rect x="917.30" y="34.0" width="2.1" height="2.8" fill="#f0f0f0"/><rect x="899.00" y="38.0" width="2.1" height="2.8" fill="#f0f0f0"/><rect x="902.05" y="38.0" width="2.1" height="2.8" fill="#f0f0f0"/><rect x="905.10" y="38.0" width="2.1" height="2.8" fill="#f0f0f0"/><rect x="908.15" y="38.0" width="2.1" height="2.8" fill="#f0f0f0"/><rect x="911.20" y="38.0" width="2.1" height="2.8" fill="#f0f0f0"/><rect x="914.25" y="38.0" width="2.1" height="2.8" fill="#f0f0f0"/><rect x="917.30" y="38.0" width="2.1" height="2.8" fill="#f0f0f0"/><rect x="899.00" y="42.0" width="2.1" height="2.8" fill="#f0f0f0"/><rect x="902.05" y="42.0" width="2.1" height="2.8" fill="#f0f0f0"/><rect x="905.10" y="42.0" width="2.1" height="2.8" fill="#f0f0f0"/><rect x="908.15" y="42.0" width="2.1" height="2.8" fill="#f0f0f0"/><rect x="911.20" y="42.0" width="2.1" height="2.8" fill="#f0f0f0"/><rect x="914.25" y="42.0" width="2.1" height="2.8" fill="#f0f0f0"/><rect x="917.30" y="42.0" width="2.1" height="2.8" fill="#f0f0f0"/><rect x="899.00" y="46.0" width="2.1" height="2.8" fill="#f0f0f0"/><rect x="902.05" y="46.0" width="2.1" height="2.8" fill="#f0f0f0"/><rect x="905.10" y="46.0" width="2.1" height="2.8" fill="#f0f0f0"/><rect x="908.15" y="46.0" width="2.1" height="2.8" fill="#f0f0f0"/><rect x="911.20" y="46.0" width="2.1" height="2.8" fill="#f0f0f0"/><rect x="914.25" y="46.0" width="2.1" height="2.8" fill="#f0f0f0"/><rect x="917.30" y="46.0" width="2.1" height="2.8" fill="#f0f0f0"/><rect x="917.3" y="29" width="2.1" height="2.8" fill="#f0f0f0"/><rect x="899" y="50" width="2.1" height="2.8" fill="#f0f0f0"/><rect x="902.05" y="50" width="2.1" height="2.8" fill="#f0f0f0"/><path d="M16.8,276.3 L23.9,280.6 L23.9,288.6 L16.8,292.4 L9.7,288.6 L9.7,280.6Z" fill="#e6e6e6"/><path d="M9.7,281 L16.8,284.6 L23.9,281" fill="none" stroke="#333" stroke-width="0.9"/><path d="M16.8,284.6 V292.4" stroke="#888" stroke-width="1"/><circle cx="17" cy="321.5" r="7.2" fill="none" stroke="#e6e6e6" stroke-width="1.7"/><circle cx="17" cy="321.5" r="3.6" fill="none" stroke="#e6e6e6" stroke-width="1.7"/><g fill="none" stroke="#555" stroke-width="1.3"><rect x="9.5" y="353" width="15" height="11"/><path d="M9.5,356 H24.5 M12,361 H22"/></g><ellipse cx="14.3" cy="400.6" rx="2.9" ry="2.1" fill="#e6e6e6" transform="rotate(-25 14.3 400.6)"/><path d="M16.6,400.5 V388" stroke="#e6e6e6" stroke-width="1.3"/><path d="M16.9,388.3 C17.8,391.5 22.6,392.5 22.4,397" fill="none" stroke="#e6e6e6" stroke-width="1.5"/><g fill="#e6e6e6"><rect x="9" y="424.0" width="2.6" height="2.6"/><rect x="21.8" y="424.0" width="2.6" height="2.6"/><rect x="9" y="428.3" width="2.6" height="2.6"/><rect x="21.8" y="428.3" width="2.6" height="2.6"/><rect x="9" y="432.6" width="2.6" height="2.6"/><rect x="21.8" y="432.6" width="2.6" height="2.6"/><rect x="9" y="436.9" width="2.6" height="2.6"/><rect x="21.8" y="436.9" width="2.6" height="2.6"/><path d="M14,428.4 L20.6,432.5 L14,436.6Z"/></g><rect x="9.7" y="461.4" width="15" height="15.5" fill="none" stroke="#e6e6e6" stroke-width="1.4"/><path d="M11,475.5 L15.5,469 L18,472 L21,466.5 L23.5,475.5Z" fill="#e6e6e6"/><circle cx="13" cy="464.5" r="1.3" fill="#e6e6e6"/><path d="M15.5,505.5 L11.8,501.8 A2.3,2.3 0 0 1 15,498.6 L23.2,506.8 A3.4,3.4 0 0 1 18.4,511.6 L11.5,504.7 M14.3,502.2 L20.8,508.7" fill="none" stroke="#e6e6e6" stroke-width="1.5" stroke-linecap="round"/><path d="M9,542.5 L12,542.5 C12,537 15,534 19.5,534 V551.5 C15,551.5 12,548 12,543.5Z" fill="#e6e6e6"/><rect x="19" y="537" width="6" height="2.5" fill="#e6e6e6"/><rect x="19" y="546" width="6" height="2.5" fill="#e6e6e6"/><rect x="8.5" y="541.5" width="4" height="2.5" fill="#e6e6e6"/><circle cx="17" cy="580" r="7.5" fill="#4c4c4c"/><text x="13.3" y="584" font-size="11" font-style="italic" font-family="Liberation Serif" fill="#2a2a2a">v</text><circle cx="17" cy="617" r="7.5" fill="#4c4c4c"/><text x="13.3" y="621.5" font-size="12" font-style="italic" font-family="Liberation Serif" fill="#2a2a2a">b</text><path d="M17,647.5 L19.1,652.3 L24.2,652.6 L20.3,655.9 L21.5,661 L17,658.3 L12.5,661 L13.7,655.9 L9.8,652.6 L14.9,652.3Z" fill="#4c4c4c"/><circle cx="936.3" cy="279.7" r="4.3" fill="none" stroke="#e6e6e6" stroke-width="2"/><path d="M939.5,283 L946,289" stroke="#e6e6e6" stroke-width="2.4"/><circle cx="939.2" cy="327.5" r="8" fill="#e6e6e6"/><circle cx="940.6" cy="322.2" r="1.3" fill="#333"/><path d="M939.2,325 L941.5,325 L939.8,331.5 L941,331.5 L940.5,332.5 L937.3,332.5 L938.8,326 L938,326Z" fill="#333"/><rect x="931" y="367" width="7.5" height="13" fill="#e6e6e6"/><rect x="939.8" y="367" width="7.5" height="13" fill="#e6e6e6"/><rect x="931" y="412.0" width="2.2" height="2" fill="#e6e6e6"/><rect x="934.7" y="412.0" width="12.8" height="2" fill="#e6e6e6"/><rect x="931" y="415.3" width="2.2" height="2" fill="#e6e6e6"/><rect x="934.7" y="415.3" width="12.8" height="2" fill="#e6e6e6"/><rect x="931" y="418.6" width="2.2" height="2" fill="#e6e6e6"/><rect x="934.7" y="418.6" width="12.8" height="2" fill="#e6e6e6"/><rect x="931" y="421.9" width="2.2" height="2" fill="#e6e6e6"/><rect x="934.7" y="421.9" width="12.8" height="2" fill="#e6e6e6"/><rect x="931" y="425.2" width="2.2" height="2" fill="#e6e6e6"/><rect x="934.7" y="425.2" width="12.8" height="2" fill="#e6e6e6"/><path d="M931,494.5 H937 L938.3,491.3 H943.7 L945,494.5 H947.3 V507.8 H931Z" fill="#e6e6e6"/><circle cx="940.8" cy="500.8" r="3.6" fill="none" stroke="#222" stroke-width="1.6"/><rect x="932.3" y="496.0" width="2" height="1.1" fill="#444"/><rect x="932.3" y="498.8" width="2" height="1.1" fill="#444"/><rect x="932.3" y="501.6" width="2" height="1.1" fill="#444"/><rect x="932.3" y="504.4" width="2" height="1.1" fill="#444"/><g fill="#4a4a4a"><rect x="932.8" y="537" width="1.6" height="16"/><rect x="938.3" y="537" width="1.6" height="16"/><rect x="943.8" y="537" width="1.6" height="16"/><ellipse cx="933.6" cy="546" rx="2" ry="3"/><ellipse cx="939.1" cy="541.5" rx="2" ry="3"/><ellipse cx="944.6" cy="547" rx="2" ry="3"/></g><rect x="929.6" y="787.7" width="7.5" height="23" fill="#555"/><rect x="940.8" y="787.7" width="7.5" height="23" fill="#555"/><rect x="929.6" y="811.50" width="7.5" height="2.9" fill="#4f4f4f"/><rect x="940.8" y="811.50" width="7.5" height="2.9" fill="#4f4f4f"/><rect x="929.6" y="815.36" width="7.5" height="2.9" fill="#4f4f4f"/><rect x="940.8" y="815.36" width="7.5" height="2.9" fill="#4f4f4f"/><rect x="929.6" y="819.22" width="7.5" height="2.9" fill="#4f4f4f"/><rect x="940.8" y="819.22" width="7.5" height="2.9" fill="#4f4f4f"/><rect x="929.6" y="823.08" width="7.5" height="2.9" fill="#4f4f4f"/><rect x="940.8" y="823.08" width="7.5" height="2.9" fill="#4f4f4f"/><rect x="929.6" y="826.94" width="7.5" height="2.9" fill="#4f4f4f"/><rect x="940.8" y="826.94" width="7.5" height="2.9" fill="#4f4f4f"/><rect x="929.6" y="830.80" width="7.5" height="2.9" fill="#4f4f4f"/><rect x="940.8" y="830.80" width="7.5" height="2.9" fill="#4f4f4f"/><rect x="929.6" y="834.66" width="7.5" height="2.9" fill="#4f4f4f"/><rect x="940.8" y="834.66" width="7.5" height="2.9" fill="#4f4f4f"/><rect x="929.6" y="838.52" width="7.5" height="2.9" fill="#4f4f4f"/><rect x="940.8" y="838.52" width="7.5" height="2.9" fill="#4f4f4f"/><rect x="929.6" y="842.38" width="7.5" height="2.9" fill="#4f4f4f"/><rect x="940.8" y="842.38" width="7.5" height="2.9" fill="#4f4f4f"/><rect x="929.6" y="846.24" width="7.5" height="2.9" fill="#4f4f4f"/><rect x="940.8" y="846.24" width="7.5" height="2.9" fill="#4f4f4f"/><rect x="929.6" y="850.10" width="7.5" height="2.9" fill="#4f4f4f"/><rect x="940.8" y="850.10" width="7.5" height="2.9" fill="#47aaf0"/><rect x="929.6" y="853.96" width="7.5" height="2.9" fill="#4f4f4f"/><rect x="940.8" y="853.96" width="7.5" height="2.9" fill="#47aaf0"/><rect x="929.6" y="857.82" width="7.5" height="2.9" fill="#47aaf0"/><rect x="940.8" y="857.82" width="7.5" height="2.9" fill="#47aaf0"/><rect x="929.6" y="861.68" width="7.5" height="2.9" fill="#47aaf0"/><rect x="940.8" y="861.68" width="7.5" height="2.9" fill="#47aaf0"/><rect x="929.6" y="865.54" width="7.5" height="2.9" fill="#47aaf0"/><rect x="940.8" y="865.54" width="7.5" height="2.9" fill="#47aaf0"/><rect x="929.6" y="869.40" width="7.5" height="2.9" fill="#47aaf0"/><rect x="940.8" y="869.40" width="7.5" height="2.9" fill="#47aaf0"/><rect x="929.6" y="873.26" width="7.5" height="2.9" fill="#47aaf0"/><rect x="940.8" y="873.26" width="7.5" height="2.9" fill="#47aaf0"/><rect x="929.6" y="877.12" width="7.5" height="2.9" fill="#47aaf0"/><rect x="940.8" y="877.12" width="7.5" height="2.9" fill="#47aaf0"/><rect x="929.6" y="880.98" width="7.5" height="2.9" fill="#47aaf0"/><rect x="940.8" y="880.98" width="7.5" height="2.9" fill="#47aaf0"/><rect x="929.6" y="884.84" width="7.5" height="2.9" fill="#47aaf0"/><rect x="940.8" y="884.84" width="7.5" height="2.9" fill="#47aaf0"/><rect x="929.6" y="888.70" width="7.5" height="2.9" fill="#47aaf0"/><rect x="940.8" y="888.70" width="7.5" height="2.9" fill="#47aaf0"/><rect x="929.6" y="892.56" width="7.5" height="2.9" fill="#47aaf0"/><rect x="940.8" y="892.56" width="7.5" height="2.9" fill="#47aaf0"/><circle cx="939" cy="815" r="5" fill="#e6e6e6"/><path d="M13.3,915.8 V912.8 A3.7,3.7 0 0 1 20.7,912.8 V915.8" fill="none" stroke="#e6e6e6" stroke-width="2.1"/><rect x="10.9" y="915.5" width="12.2" height="8.3" fill="#e6e6e6"/><circle cx="16.9" cy="918" r="1.3" fill="#333"/><rect x="16.2" y="918" width="1.4" height="3.6" fill="#333"/><rect x="41.1" y="909" width="14" height="13.8" fill="none" stroke="#555" stroke-width="2"/><path d="M48.3,912.3 L55.5,919.2 L52.3,919.6 L54.3,923.2 L52.8,924 L50.8,920.5 L48.6,922.8Z" fill="#555"/><rect x="86" y="907.5" width="17.5" height="10.5" fill="#e6e6e6"/><path d="M88,923.5 L94.7,917.5 L101.5,923.5" fill="none" stroke="#e6e6e6" stroke-width="1.8"/><rect x="131.9" y="909.2" width="11.7" height="8.5" fill="#e6e6e6" stroke="#333" stroke-width="0.8"/><rect x="136.9" y="913.4" width="12.6" height="10" fill="#e6e6e6" stroke="#333" stroke-width="1"/><rect x="178" y="911.4" width="16.6" height="8.6" fill="#4c4c4c"/><path d="M183,906 L189.6,925" stroke="#4c4c4c" stroke-width="1.4"/><path d="M183.7,906 L190.3,925" stroke="#333" stroke-width="0.6"/><g stroke="#474747" stroke-width="1"><path d="M209.5,906 V925 M208,908.5 H225"/><path d="M214.0,906 V925 M208,913.0 H225"/><path d="M218.5,906 V925 M208,917.5 H225"/><path d="M223.0,906 V925 M208,922.0 H225"/></g><path d="M256,914 L263,921 C265,923 268,920 266,918 L258,910 C256.5,908.5 254.5,910.5 256,912 L263,919" fill="none" stroke="#4c4c4c" stroke-width="1.4"/><path d="M266,908 V915 M262.5,911.5 H269.5" stroke="#4c4c4c" stroke-width="1.5"/><path d="M301.2,922.3 L309.5,914" stroke="#e6e6e6" stroke-width="3.2" stroke-linecap="round"/><circle cx="311.8" cy="911.8" r="4.6" fill="#e6e6e6"/><path d="M311.8,911.8 L317,906.6" stroke="#333" stroke-width="3.2"/><rect x="344.5" y="907.5" width="18" height="16.6" fill="#e6e6e6"/><g fill="#333"><rect x="349.5" y="907.5" width="2.2" height="9"/><rect x="355.3" y="907.5" width="2.2" height="9"/><rect x="348.9" y="916" width="0.8" height="8"/><rect x="354.2" y="916" width="0.8" height="8"/><rect x="358.5" y="916" width="0.8" height="8"/></g><g fill="#e6e6e6"><rect x="391.0" y="908.0" width="2.6" height="2.6"/><rect x="394.5" y="908.0" width="2.6" height="2.6"/><rect x="398.0" y="908.0" width="2.6" height="2.6"/><rect x="401.5" y="908.0" width="2.6" height="2.6"/><rect x="405.0" y="908.0" width="2.6" height="2.6"/><rect x="392.5" y="911.6" width="2.6" height="2.6"/><rect x="396.0" y="911.6" width="2.6" height="2.6"/><rect x="399.5" y="911.6" width="2.6" height="2.6"/><rect x="403.0" y="911.6" width="2.6" height="2.6"/><rect x="391.0" y="915.2" width="2.6" height="2.6"/><rect x="394.5" y="915.2" width="2.6" height="2.6"/><rect x="398.0" y="915.2" width="2.6" height="2.6"/><rect x="401.5" y="915.2" width="2.6" height="2.6"/><rect x="405.0" y="915.2" width="2.6" height="2.6"/><rect x="391" y="919" width="17" height="3" /></g><circle cx="887.7" cy="916" r="9.3" fill="none" stroke="#545454" stroke-width="3.8" stroke-dasharray="13.5 1.1"/><path d="M884.8,912.3 L892,916 L884.8,920Z" fill="#f0f0f0"/><path d="M934.2,912.2 A6.6,6.6 0 1 0 943.8,912.2" fill="none" stroke="#47aaf0" stroke-width="2.3"/><rect x="937.9" y="908" width="2.3" height="9.5" fill="#47aaf0"/><path d="M0,928 A5,5 0 0 0 5,933 L0,933Z" fill="#fff"/><path d="M956,928 A5,5 0 0 1 951,933 L956,933Z" fill="#fff"/></svg>
</body></html>
